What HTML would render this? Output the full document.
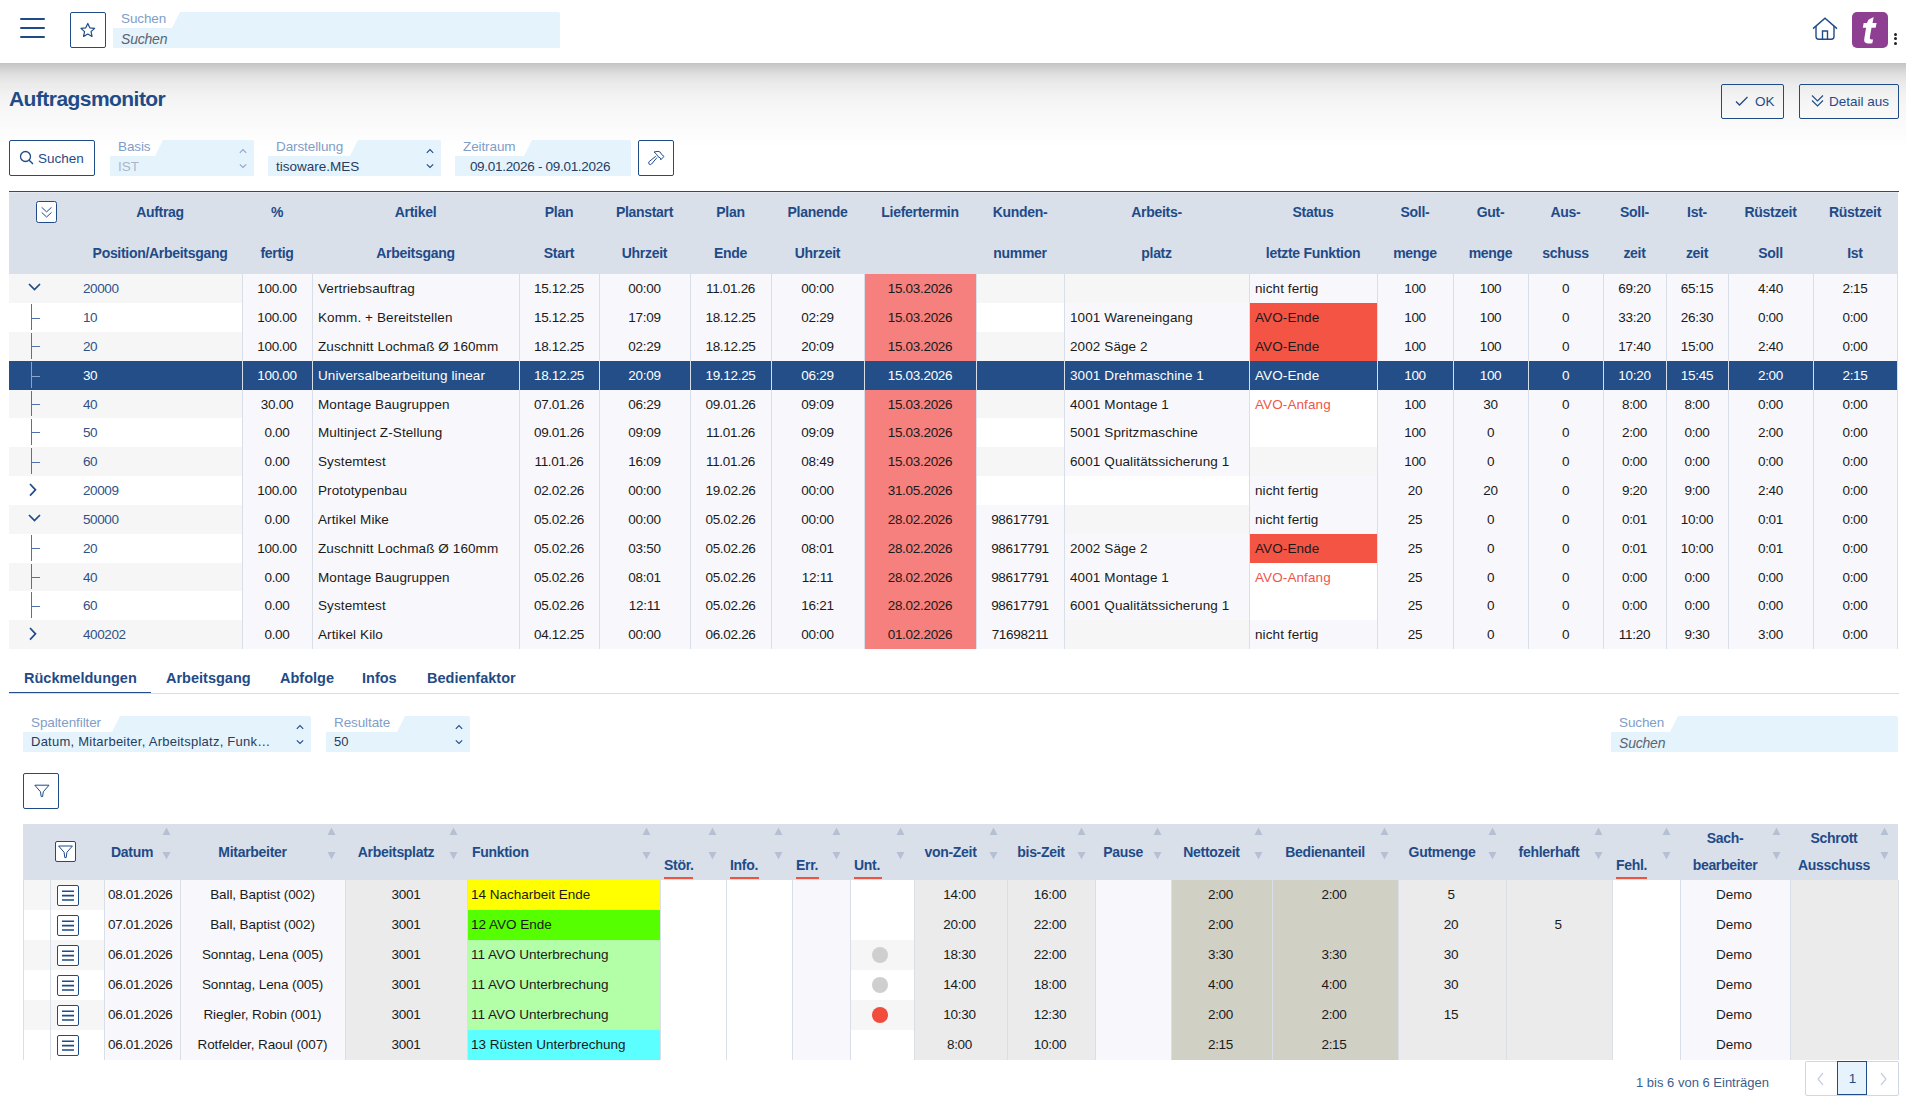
<!DOCTYPE html>
<html><head><meta charset="utf-8"><title>Auftragsmonitor</title>
<style>
html,body{margin:0;padding:0;}
body{width:1906px;height:1108px;position:relative;overflow:hidden;background:#fff;font-family:"Liberation Sans",sans-serif;}
.t{position:absolute;height:20px;line-height:20px;white-space:nowrap;}
</style></head><body>
<div style="position:absolute;left:0px;top:0px;width:1906px;height:63px;background:#fff;"></div><div style="position:absolute;left:0px;top:63px;width:1906px;height:85px;background:linear-gradient(to bottom,#c3c3c3 0px,#d3d3d3 6px,#e0e0e0 12px,#eaeaea 20px,#f1f1f1 30px,#f6f6f6 42px,#f9f9f9 55px,#fcfcfc 70px,#fff 85px);"></div><div style="position:absolute;left:19.8px;top:18.2px;width:25.2px;height:1.8px;background:#1f4b87;border-radius:1px;"></div><div style="position:absolute;left:19.8px;top:27.3px;width:25.2px;height:1.8px;background:#1f4b87;border-radius:1px;"></div><div style="position:absolute;left:19.8px;top:36.3px;width:25.2px;height:1.8px;background:#1f4b87;border-radius:1px;"></div><div style="position:absolute;left:70px;top:12px;width:34px;height:34px;border:1px solid #1f4b87;border-radius:2px;background:#fff;"><svg width="34" height="34" viewBox="0 0 34 34" style="position:absolute;left:0;top:0"><path d="M16.80 10.40 L18.80 14.85 L23.65 15.38 L20.03 18.65 L21.03 23.42 L16.80 21.00 L12.57 23.42 L13.57 18.65 L9.95 15.38 L14.80 14.85 Z" fill="none" stroke="#1f4b87" stroke-width="1.2" stroke-linejoin="round"/></svg></div><svg style="position:absolute;left:113px;top:12px" width="447" height="36"><path d="M0 16 L59 16 L67 0 L445 0 Q447 0 447 2 L447 36 L0 36 Z" fill="#e5f3fd"/></svg><div class="t" style="left:121px;top:8.5px;color:#7f9dc7;font-size:13.5px;letter-spacing:-0.1px;">Suchen</div><div class="t" style="left:121px;top:28.799999999999997px;color:#5a6470;font-style:italic;font-size:14px;letter-spacing:-0.2px;">Suchen</div><svg style="position:absolute;left:1810px;top:15px" width="30" height="28" viewBox="0 0 30 28"><path d="M3 13.6 L15 3.2 L27 13.6" fill="none" stroke="#1f4b87" stroke-width="1.4"/><path d="M6 11 L6 21.5 Q6 24.2 8.7 24.2 L21.3 24.2 Q24 24.2 24 21.5 L24 11" fill="none" stroke="#1f4b87" stroke-width="1.4"/><path d="M12.5 24 L12.5 16 L17.5 16 L17.5 24" fill="none" stroke="#1f4b87" stroke-width="1.4"/></svg><div style="position:absolute;left:1852px;top:12px;width:36px;height:36px;background:#8e3f92;border-radius:5px;"><svg width="36" height="36" viewBox="0 0 36 36" style="position:absolute;left:0;top:0"><g transform="translate(-0.8,0)"><path d="M17.2 7.8 L22.5 5.1 L21.3 11.1 L25.4 11.1 L24.4 15.8 L20.3 15.8 L18.6 25.6 Q18.3 27.6 20.3 27.6 L21.9 27.6 L21.1 31.3 Q18.5 31.6 16.5 31.4 Q12.3 31 13.1 26.4 L14.9 15.8 L11.6 15.8 L12.5 11.1 L15.8 11.1 Z" fill="#fff"/></g></svg></div><div style="position:absolute;left:1893.9px;top:32.6px;width:3.2px;height:3.2px;background:#222;border-radius:50%;"></div><div style="position:absolute;left:1893.9px;top:37.0px;width:3.2px;height:3.2px;background:#222;border-radius:50%;"></div><div style="position:absolute;left:1893.9px;top:41.5px;width:3.2px;height:3.2px;background:#222;border-radius:50%;"></div><div class="t" style="left:9px;top:88.6px;color:#1f4b87;font-size:21px;font-weight:bold;letter-spacing:-0.55px;">Auftragsmonitor</div><div style="position:absolute;left:1721px;top:84px;width:61px;height:33px;border:1.5px solid #1f4b87;border-radius:2px;"></div><svg style="position:absolute;left:1734px;top:94px" width="16" height="14"><path d="M2 7.5 L5.5 11 L13.5 3" fill="none" stroke="#1f4b87" stroke-width="1.3"/></svg><div class="t" style="left:1755px;top:91.6px;color:#1f4b87;font-size:13.5px;">OK</div><div style="position:absolute;left:1799px;top:84px;width:98px;height:33px;border:1.5px solid #1f4b87;border-radius:2px;"></div><svg style="position:absolute;left:1810px;top:93px" width="16" height="16"><path d="M2 2.5 L7.5 8 L13 2.5 M2 7.5 L7.5 13 L13 7.5" fill="none" stroke="#1f4b87" stroke-width="1.1"/></svg><div class="t" style="left:1829px;top:91.6px;color:#1f4b87;font-size:13.5px;">Detail aus</div><div style="position:absolute;left:9px;top:140px;width:84px;height:34px;border:1px solid #1f4b87;border-radius:2px;background:#fff;"></div><svg style="position:absolute;left:19px;top:150px" width="16" height="16"><circle cx="6.5" cy="6.5" r="5" fill="none" stroke="#1f4b87" stroke-width="1.3"/><path d="M10.2 10.2 L14 14" stroke="#1f4b87" stroke-width="1.4"/></svg><div class="t" style="left:38px;top:148.7px;color:#1f4b87;font-size:13.5px;">Suchen</div><svg style="position:absolute;left:110px;top:140px" width="144" height="36"><path d="M0 16 L45 16 L53 0 L142 0 Q144 0 144 2 L144 36 L0 36 Z" fill="#e5f3fd"/></svg><div class="t" style="left:118px;top:136.5px;color:#7f9dc7;font-size:13.5px;letter-spacing:-0.1px;">Basis</div><div class="t" style="left:118px;top:156.7px;color:#a9b6c9;font-size:13.5px;">IST</div><svg style="position:absolute;left:238px;top:140px" width="10" height="36"><path d="M1.8 12.8 L5 9.6 L8.2 12.8" fill="none" stroke="#8fa6c6" stroke-width="1.1"/><path d="M1.8 24.3 L5 27.5 L8.2 24.3" fill="none" stroke="#8fa6c6" stroke-width="1.1"/></svg><svg style="position:absolute;left:268px;top:140px" width="173" height="36"><path d="M0 16 L82 16 L90 0 L171 0 Q173 0 173 2 L173 36 L0 36 Z" fill="#e5f3fd"/></svg><div class="t" style="left:276px;top:136.5px;color:#7f9dc7;font-size:13.5px;letter-spacing:-0.1px;">Darstellung</div><div class="t" style="left:276px;top:156.7px;color:#273d5e;font-size:13.5px;">tisoware.MES</div><svg style="position:absolute;left:425px;top:140px" width="10" height="36"><path d="M1.8 12.8 L5 9.6 L8.2 12.8" fill="none" stroke="#1f4b87" stroke-width="1.1"/><path d="M1.8 24.3 L5 27.5 L8.2 24.3" fill="none" stroke="#1f4b87" stroke-width="1.1"/></svg><svg style="position:absolute;left:455px;top:140px" width="176" height="36"><path d="M0 16 L69 16 L77 0 L174 0 Q176 0 176 2 L176 36 L0 36 Z" fill="#e5f3fd"/></svg><div class="t" style="left:463px;top:136.5px;color:#7f9dc7;font-size:13.5px;letter-spacing:-0.1px;">Zeitraum</div><div class="t" style="left:463px;top:157px;color:#273d5e;font-size:13.5px;letter-spacing:-0.3px;">&nbsp;&nbsp;09.01.2026 - 09.01.2026</div><div style="position:absolute;left:638px;top:140px;width:34px;height:34px;border:1px solid #1f4b87;border-radius:2px;background:#fff;"></div><svg style="position:absolute;left:636px;top:138px" width="40" height="40" viewBox="0 0 40 40"><path d="M18 14 L22 13.3 Q24.8 13.5 25.6 16.5 L28 18.4 L24.8 21.8 L24.3 20 Q21.5 19 20.5 16.2 Z" fill="none" stroke="#1f4b87" stroke-width="1" stroke-linejoin="round"/><path d="M19.8 18.2 L13.2 23.6 Q12 25 13.2 26.2 Q14.5 27.2 15.6 26 L21 19.6" fill="none" stroke="#1f4b87" stroke-width="1"/></svg><div style="position:absolute;left:9px;top:191px;width:1890px;height:1px;background:#234e87;"></div><div style="position:absolute;left:9px;top:192px;width:1889px;height:1px;background:#e5e9ef;"></div><div style="position:absolute;left:9px;top:193px;width:1889px;height:81px;background:#d9e0ea;"></div><div style="position:absolute;left:36px;top:201px;width:19px;height:20px;border:1px solid #1f4b87;border-radius:2.5px;background:#fff;"><svg width="19" height="20" style="position:absolute;left:0;top:0"><path d="M4.7 5.3 L9.6 9.9 L14.5 5.3 M4.7 10.4 L9.6 15 L14.5 10.4" fill="none" stroke="#1f4b87" stroke-width="1"/></svg></div><div class="t" style="left:68.0px;top:202px;width:184px;text-align:center;color:#1f4b87;font-weight:bold;font-size:14px;letter-spacing:-0.3px;">Auftrag</div><div class="t" style="left:68.0px;top:243px;width:184px;text-align:center;color:#1f4b87;font-weight:bold;font-size:14px;letter-spacing:-0.3px;">Position/Arbeitsgang</div><div class="t" style="left:232.0px;top:202px;width:90px;text-align:center;color:#1f4b87;font-weight:bold;font-size:14px;letter-spacing:-0.3px;">%</div><div class="t" style="left:232.0px;top:243px;width:90px;text-align:center;color:#1f4b87;font-weight:bold;font-size:14px;letter-spacing:-0.3px;">fertig</div><div class="t" style="left:302.0px;top:202px;width:227px;text-align:center;color:#1f4b87;font-weight:bold;font-size:14px;letter-spacing:-0.3px;">Artikel</div><div class="t" style="left:302.0px;top:243px;width:227px;text-align:center;color:#1f4b87;font-weight:bold;font-size:14px;letter-spacing:-0.3px;">Arbeitsgang</div><div class="t" style="left:509.0px;top:202px;width:100px;text-align:center;color:#1f4b87;font-weight:bold;font-size:14px;letter-spacing:-0.3px;">Plan</div><div class="t" style="left:509.0px;top:243px;width:100px;text-align:center;color:#1f4b87;font-weight:bold;font-size:14px;letter-spacing:-0.3px;">Start</div><div class="t" style="left:589.0px;top:202px;width:111px;text-align:center;color:#1f4b87;font-weight:bold;font-size:14px;letter-spacing:-0.3px;">Planstart</div><div class="t" style="left:589.0px;top:243px;width:111px;text-align:center;color:#1f4b87;font-weight:bold;font-size:14px;letter-spacing:-0.3px;">Uhrzeit</div><div class="t" style="left:680.0px;top:202px;width:101px;text-align:center;color:#1f4b87;font-weight:bold;font-size:14px;letter-spacing:-0.3px;">Plan</div><div class="t" style="left:680.0px;top:243px;width:101px;text-align:center;color:#1f4b87;font-weight:bold;font-size:14px;letter-spacing:-0.3px;">Ende</div><div class="t" style="left:761.0px;top:202px;width:113px;text-align:center;color:#1f4b87;font-weight:bold;font-size:14px;letter-spacing:-0.3px;">Planende</div><div class="t" style="left:761.0px;top:243px;width:113px;text-align:center;color:#1f4b87;font-weight:bold;font-size:14px;letter-spacing:-0.3px;">Uhrzeit</div><div class="t" style="left:854.0px;top:202px;width:132px;text-align:center;color:#1f4b87;font-weight:bold;font-size:14px;letter-spacing:-0.3px;">Liefertermin</div><div class="t" style="left:966.0px;top:202px;width:108px;text-align:center;color:#1f4b87;font-weight:bold;font-size:14px;letter-spacing:-0.3px;">Kunden-</div><div class="t" style="left:966.0px;top:243px;width:108px;text-align:center;color:#1f4b87;font-weight:bold;font-size:14px;letter-spacing:-0.3px;">nummer</div><div class="t" style="left:1054.0px;top:202px;width:205px;text-align:center;color:#1f4b87;font-weight:bold;font-size:14px;letter-spacing:-0.3px;">Arbeits-</div><div class="t" style="left:1054.0px;top:243px;width:205px;text-align:center;color:#1f4b87;font-weight:bold;font-size:14px;letter-spacing:-0.3px;">platz</div><div class="t" style="left:1239.0px;top:202px;width:148px;text-align:center;color:#1f4b87;font-weight:bold;font-size:14px;letter-spacing:-0.3px;">Status</div><div class="t" style="left:1239.0px;top:243px;width:148px;text-align:center;color:#1f4b87;font-weight:bold;font-size:14px;letter-spacing:-0.3px;">letzte Funktion</div><div class="t" style="left:1367.0px;top:202px;width:96px;text-align:center;color:#1f4b87;font-weight:bold;font-size:14px;letter-spacing:-0.3px;">Soll-</div><div class="t" style="left:1367.0px;top:243px;width:96px;text-align:center;color:#1f4b87;font-weight:bold;font-size:14px;letter-spacing:-0.3px;">menge</div><div class="t" style="left:1443.0px;top:202px;width:95px;text-align:center;color:#1f4b87;font-weight:bold;font-size:14px;letter-spacing:-0.3px;">Gut-</div><div class="t" style="left:1443.0px;top:243px;width:95px;text-align:center;color:#1f4b87;font-weight:bold;font-size:14px;letter-spacing:-0.3px;">menge</div><div class="t" style="left:1518.0px;top:202px;width:95px;text-align:center;color:#1f4b87;font-weight:bold;font-size:14px;letter-spacing:-0.3px;">Aus-</div><div class="t" style="left:1518.0px;top:243px;width:95px;text-align:center;color:#1f4b87;font-weight:bold;font-size:14px;letter-spacing:-0.3px;">schuss</div><div class="t" style="left:1593.0px;top:202px;width:83px;text-align:center;color:#1f4b87;font-weight:bold;font-size:14px;letter-spacing:-0.3px;">Soll-</div><div class="t" style="left:1593.0px;top:243px;width:83px;text-align:center;color:#1f4b87;font-weight:bold;font-size:14px;letter-spacing:-0.3px;">zeit</div><div class="t" style="left:1656.0px;top:202px;width:82px;text-align:center;color:#1f4b87;font-weight:bold;font-size:14px;letter-spacing:-0.3px;">Ist-</div><div class="t" style="left:1656.0px;top:243px;width:82px;text-align:center;color:#1f4b87;font-weight:bold;font-size:14px;letter-spacing:-0.3px;">zeit</div><div class="t" style="left:1718.0px;top:202px;width:105px;text-align:center;color:#1f4b87;font-weight:bold;font-size:14px;letter-spacing:-0.3px;">Rüstzeit</div><div class="t" style="left:1718.0px;top:243px;width:105px;text-align:center;color:#1f4b87;font-weight:bold;font-size:14px;letter-spacing:-0.3px;">Soll</div><div class="t" style="left:1803.0px;top:202px;width:104px;text-align:center;color:#1f4b87;font-weight:bold;font-size:14px;letter-spacing:-0.3px;">Rüstzeit</div><div class="t" style="left:1803.0px;top:243px;width:104px;text-align:center;color:#1f4b87;font-weight:bold;font-size:14px;letter-spacing:-0.3px;">Ist</div><div style="position:absolute;left:9px;top:274px;width:233px;height:29px;background:#f6f6f6;"></div><div style="position:absolute;left:242px;top:274px;width:70px;height:29px;background:#f8f8fc;"></div><div style="position:absolute;left:312px;top:274px;width:207px;height:29px;background:#f8f8fc;"></div><div style="position:absolute;left:519px;top:274px;width:80px;height:29px;background:#f8f8fc;"></div><div style="position:absolute;left:599px;top:274px;width:91px;height:29px;background:#f8f8fc;"></div><div style="position:absolute;left:690px;top:274px;width:81px;height:29px;background:#f8f8fc;"></div><div style="position:absolute;left:771px;top:274px;width:93px;height:29px;background:#f8f8fc;"></div><div style="position:absolute;left:864px;top:274px;width:112px;height:29px;background:#f5807d;"></div><div style="position:absolute;left:976px;top:274px;width:88px;height:29px;background:#f6f6f6;"></div><div style="position:absolute;left:1064px;top:274px;width:185px;height:29px;background:#f6f6f6;"></div><div style="position:absolute;left:1249px;top:274px;width:128px;height:29px;background:#f8f8fc;"></div><div style="position:absolute;left:1377px;top:274px;width:76px;height:29px;background:#f8f8fc;"></div><div style="position:absolute;left:1453px;top:274px;width:75px;height:29px;background:#f8f8fc;"></div><div style="position:absolute;left:1528px;top:274px;width:75px;height:29px;background:#f8f8fc;"></div><div style="position:absolute;left:1603px;top:274px;width:63px;height:29px;background:#f8f8fc;"></div><div style="position:absolute;left:1666px;top:274px;width:62px;height:29px;background:#f8f8fc;"></div><div style="position:absolute;left:1728px;top:274px;width:85px;height:29px;background:#f8f8fc;"></div><div style="position:absolute;left:1813px;top:274px;width:84px;height:29px;background:#f8f8fc;"></div><svg style="position:absolute;left:27px;top:282.0px" width="16" height="10"><path d="M2 2 L7.5 7.5 L13 2" fill="none" stroke="#1f4b87" stroke-width="1.7"/></svg><div class="t" style="left:83px;top:279.0px;color:#2f5288;font-size:13.5px;letter-spacing:-0.4px;">20000</div><div class="t" style="left:242.0px;top:279.0px;width:70px;text-align:center;color:#1a1a1a;font-size:13.5px;letter-spacing:-0.3px;">100.00</div><div class="t" style="left:318px;top:279.0px;color:#1a1a1a;font-size:13.5px;letter-spacing:0.1px;">Vertriebsauftrag</div><div class="t" style="left:519.0px;top:279.0px;width:80px;text-align:center;color:#1a1a1a;font-size:13.5px;letter-spacing:-0.3px;">15.12.25</div><div class="t" style="left:599.0px;top:279.0px;width:91px;text-align:center;color:#1a1a1a;font-size:13.5px;letter-spacing:-0.3px;">00:00</div><div class="t" style="left:690.0px;top:279.0px;width:81px;text-align:center;color:#1a1a1a;font-size:13.5px;letter-spacing:-0.3px;">11.01.26</div><div class="t" style="left:771.0px;top:279.0px;width:93px;text-align:center;color:#1a1a1a;font-size:13.5px;letter-spacing:-0.3px;">00:00</div><div class="t" style="left:864.0px;top:279.0px;width:112px;text-align:center;color:#1a1a1a;font-size:13.5px;letter-spacing:-0.3px;">15.03.2026</div><div class="t" style="left:1255px;top:279.0px;color:#1a1a1a;font-size:13.5px;letter-spacing:0.1px;">nicht fertig</div><div class="t" style="left:1377.0px;top:279.0px;width:76px;text-align:center;color:#1a1a1a;font-size:13.5px;letter-spacing:-0.3px;">100</div><div class="t" style="left:1453.0px;top:279.0px;width:75px;text-align:center;color:#1a1a1a;font-size:13.5px;letter-spacing:-0.3px;">100</div><div class="t" style="left:1528.0px;top:279.0px;width:75px;text-align:center;color:#1a1a1a;font-size:13.5px;letter-spacing:-0.3px;">0</div><div class="t" style="left:1603.0px;top:279.0px;width:63px;text-align:center;color:#1a1a1a;font-size:13.5px;letter-spacing:-0.3px;">69:20</div><div class="t" style="left:1666.0px;top:279.0px;width:62px;text-align:center;color:#1a1a1a;font-size:13.5px;letter-spacing:-0.3px;">65:15</div><div class="t" style="left:1728.0px;top:279.0px;width:85px;text-align:center;color:#1a1a1a;font-size:13.5px;letter-spacing:-0.3px;">4:40</div><div class="t" style="left:1813.0px;top:279.0px;width:84px;text-align:center;color:#1a1a1a;font-size:13.5px;letter-spacing:-0.3px;">2:15</div><div style="position:absolute;left:9px;top:303px;width:233px;height:29px;background:#fff;"></div><div style="position:absolute;left:242px;top:303px;width:70px;height:29px;background:#f8f8fc;"></div><div style="position:absolute;left:312px;top:303px;width:207px;height:29px;background:#f8f8fc;"></div><div style="position:absolute;left:519px;top:303px;width:80px;height:29px;background:#f8f8fc;"></div><div style="position:absolute;left:599px;top:303px;width:91px;height:29px;background:#f8f8fc;"></div><div style="position:absolute;left:690px;top:303px;width:81px;height:29px;background:#f8f8fc;"></div><div style="position:absolute;left:771px;top:303px;width:93px;height:29px;background:#f8f8fc;"></div><div style="position:absolute;left:864px;top:303px;width:112px;height:29px;background:#f5807d;"></div><div style="position:absolute;left:976px;top:303px;width:88px;height:29px;background:#fff;"></div><div style="position:absolute;left:1064px;top:303px;width:185px;height:29px;background:#f8f8fc;"></div><div style="position:absolute;left:1249px;top:303px;width:128px;height:29px;background:#f45444;"></div><div style="position:absolute;left:1377px;top:303px;width:76px;height:29px;background:#f8f8fc;"></div><div style="position:absolute;left:1453px;top:303px;width:75px;height:29px;background:#f8f8fc;"></div><div style="position:absolute;left:1528px;top:303px;width:75px;height:29px;background:#f8f8fc;"></div><div style="position:absolute;left:1603px;top:303px;width:63px;height:29px;background:#f8f8fc;"></div><div style="position:absolute;left:1666px;top:303px;width:62px;height:29px;background:#f8f8fc;"></div><div style="position:absolute;left:1728px;top:303px;width:85px;height:29px;background:#f8f8fc;"></div><div style="position:absolute;left:1813px;top:303px;width:84px;height:29px;background:#f8f8fc;"></div><div style="position:absolute;left:31px;top:304px;width:1px;height:26px;background:#4d72ad;"></div><div style="position:absolute;left:31px;top:318px;width:9px;height:1px;background:#4d72ad;"></div><div class="t" style="left:83px;top:308.0px;color:#2f5288;font-size:13.5px;letter-spacing:-0.4px;">10</div><div class="t" style="left:242.0px;top:308.0px;width:70px;text-align:center;color:#1a1a1a;font-size:13.5px;letter-spacing:-0.3px;">100.00</div><div class="t" style="left:318px;top:308.0px;color:#1a1a1a;font-size:13.5px;letter-spacing:0.1px;">Komm. + Bereitstellen</div><div class="t" style="left:519.0px;top:308.0px;width:80px;text-align:center;color:#1a1a1a;font-size:13.5px;letter-spacing:-0.3px;">15.12.25</div><div class="t" style="left:599.0px;top:308.0px;width:91px;text-align:center;color:#1a1a1a;font-size:13.5px;letter-spacing:-0.3px;">17:09</div><div class="t" style="left:690.0px;top:308.0px;width:81px;text-align:center;color:#1a1a1a;font-size:13.5px;letter-spacing:-0.3px;">18.12.25</div><div class="t" style="left:771.0px;top:308.0px;width:93px;text-align:center;color:#1a1a1a;font-size:13.5px;letter-spacing:-0.3px;">02:29</div><div class="t" style="left:864.0px;top:308.0px;width:112px;text-align:center;color:#1a1a1a;font-size:13.5px;letter-spacing:-0.3px;">15.03.2026</div><div class="t" style="left:1070px;top:308.0px;color:#1a1a1a;font-size:13.5px;letter-spacing:0.1px;">1001 Wareneingang</div><div class="t" style="left:1255px;top:308.0px;color:#1a1a1a;font-size:13.5px;letter-spacing:0.1px;">AVO-Ende</div><div class="t" style="left:1377.0px;top:308.0px;width:76px;text-align:center;color:#1a1a1a;font-size:13.5px;letter-spacing:-0.3px;">100</div><div class="t" style="left:1453.0px;top:308.0px;width:75px;text-align:center;color:#1a1a1a;font-size:13.5px;letter-spacing:-0.3px;">100</div><div class="t" style="left:1528.0px;top:308.0px;width:75px;text-align:center;color:#1a1a1a;font-size:13.5px;letter-spacing:-0.3px;">0</div><div class="t" style="left:1603.0px;top:308.0px;width:63px;text-align:center;color:#1a1a1a;font-size:13.5px;letter-spacing:-0.3px;">33:20</div><div class="t" style="left:1666.0px;top:308.0px;width:62px;text-align:center;color:#1a1a1a;font-size:13.5px;letter-spacing:-0.3px;">26:30</div><div class="t" style="left:1728.0px;top:308.0px;width:85px;text-align:center;color:#1a1a1a;font-size:13.5px;letter-spacing:-0.3px;">0:00</div><div class="t" style="left:1813.0px;top:308.0px;width:84px;text-align:center;color:#1a1a1a;font-size:13.5px;letter-spacing:-0.3px;">0:00</div><div style="position:absolute;left:9px;top:332px;width:233px;height:29px;background:#f6f6f6;"></div><div style="position:absolute;left:242px;top:332px;width:70px;height:29px;background:#f8f8fc;"></div><div style="position:absolute;left:312px;top:332px;width:207px;height:29px;background:#f8f8fc;"></div><div style="position:absolute;left:519px;top:332px;width:80px;height:29px;background:#f8f8fc;"></div><div style="position:absolute;left:599px;top:332px;width:91px;height:29px;background:#f8f8fc;"></div><div style="position:absolute;left:690px;top:332px;width:81px;height:29px;background:#f8f8fc;"></div><div style="position:absolute;left:771px;top:332px;width:93px;height:29px;background:#f8f8fc;"></div><div style="position:absolute;left:864px;top:332px;width:112px;height:29px;background:#f5807d;"></div><div style="position:absolute;left:976px;top:332px;width:88px;height:29px;background:#f6f6f6;"></div><div style="position:absolute;left:1064px;top:332px;width:185px;height:29px;background:#f8f8fc;"></div><div style="position:absolute;left:1249px;top:332px;width:128px;height:29px;background:#f45444;"></div><div style="position:absolute;left:1377px;top:332px;width:76px;height:29px;background:#f8f8fc;"></div><div style="position:absolute;left:1453px;top:332px;width:75px;height:29px;background:#f8f8fc;"></div><div style="position:absolute;left:1528px;top:332px;width:75px;height:29px;background:#f8f8fc;"></div><div style="position:absolute;left:1603px;top:332px;width:63px;height:29px;background:#f8f8fc;"></div><div style="position:absolute;left:1666px;top:332px;width:62px;height:29px;background:#f8f8fc;"></div><div style="position:absolute;left:1728px;top:332px;width:85px;height:29px;background:#f8f8fc;"></div><div style="position:absolute;left:1813px;top:332px;width:84px;height:29px;background:#f8f8fc;"></div><div style="position:absolute;left:31px;top:333px;width:1px;height:26px;background:#4d72ad;"></div><div style="position:absolute;left:31px;top:346px;width:9px;height:1px;background:#4d72ad;"></div><div class="t" style="left:83px;top:337.0px;color:#2f5288;font-size:13.5px;letter-spacing:-0.4px;">20</div><div class="t" style="left:242.0px;top:337.0px;width:70px;text-align:center;color:#1a1a1a;font-size:13.5px;letter-spacing:-0.3px;">100.00</div><div class="t" style="left:318px;top:337.0px;color:#1a1a1a;font-size:13.5px;letter-spacing:0.1px;">Zuschnitt Lochmaß Ø 160mm</div><div class="t" style="left:519.0px;top:337.0px;width:80px;text-align:center;color:#1a1a1a;font-size:13.5px;letter-spacing:-0.3px;">18.12.25</div><div class="t" style="left:599.0px;top:337.0px;width:91px;text-align:center;color:#1a1a1a;font-size:13.5px;letter-spacing:-0.3px;">02:29</div><div class="t" style="left:690.0px;top:337.0px;width:81px;text-align:center;color:#1a1a1a;font-size:13.5px;letter-spacing:-0.3px;">18.12.25</div><div class="t" style="left:771.0px;top:337.0px;width:93px;text-align:center;color:#1a1a1a;font-size:13.5px;letter-spacing:-0.3px;">20:09</div><div class="t" style="left:864.0px;top:337.0px;width:112px;text-align:center;color:#1a1a1a;font-size:13.5px;letter-spacing:-0.3px;">15.03.2026</div><div class="t" style="left:1070px;top:337.0px;color:#1a1a1a;font-size:13.5px;letter-spacing:0.1px;">2002 Säge 2</div><div class="t" style="left:1255px;top:337.0px;color:#1a1a1a;font-size:13.5px;letter-spacing:0.1px;">AVO-Ende</div><div class="t" style="left:1377.0px;top:337.0px;width:76px;text-align:center;color:#1a1a1a;font-size:13.5px;letter-spacing:-0.3px;">100</div><div class="t" style="left:1453.0px;top:337.0px;width:75px;text-align:center;color:#1a1a1a;font-size:13.5px;letter-spacing:-0.3px;">100</div><div class="t" style="left:1528.0px;top:337.0px;width:75px;text-align:center;color:#1a1a1a;font-size:13.5px;letter-spacing:-0.3px;">0</div><div class="t" style="left:1603.0px;top:337.0px;width:63px;text-align:center;color:#1a1a1a;font-size:13.5px;letter-spacing:-0.3px;">17:40</div><div class="t" style="left:1666.0px;top:337.0px;width:62px;text-align:center;color:#1a1a1a;font-size:13.5px;letter-spacing:-0.3px;">15:00</div><div class="t" style="left:1728.0px;top:337.0px;width:85px;text-align:center;color:#1a1a1a;font-size:13.5px;letter-spacing:-0.3px;">2:40</div><div class="t" style="left:1813.0px;top:337.0px;width:84px;text-align:center;color:#1a1a1a;font-size:13.5px;letter-spacing:-0.3px;">0:00</div><div style="position:absolute;left:9px;top:361px;width:1889px;height:29px;background:#234e87;"></div><div style="position:absolute;left:31px;top:362px;width:1px;height:26px;background:#8aa3c9;"></div><div style="position:absolute;left:31px;top:376px;width:9px;height:1px;background:#8aa3c9;"></div><div class="t" style="left:83px;top:366.0px;color:#fff;font-size:13.5px;letter-spacing:-0.4px;">30</div><div class="t" style="left:242.0px;top:366.0px;width:70px;text-align:center;color:#fff;font-size:13.5px;letter-spacing:-0.3px;">100.00</div><div class="t" style="left:318px;top:366.0px;color:#fff;font-size:13.5px;letter-spacing:0.1px;">Universalbearbeitung linear</div><div class="t" style="left:519.0px;top:366.0px;width:80px;text-align:center;color:#fff;font-size:13.5px;letter-spacing:-0.3px;">18.12.25</div><div class="t" style="left:599.0px;top:366.0px;width:91px;text-align:center;color:#fff;font-size:13.5px;letter-spacing:-0.3px;">20:09</div><div class="t" style="left:690.0px;top:366.0px;width:81px;text-align:center;color:#fff;font-size:13.5px;letter-spacing:-0.3px;">19.12.25</div><div class="t" style="left:771.0px;top:366.0px;width:93px;text-align:center;color:#fff;font-size:13.5px;letter-spacing:-0.3px;">06:29</div><div class="t" style="left:864.0px;top:366.0px;width:112px;text-align:center;color:#fff;font-size:13.5px;letter-spacing:-0.3px;">15.03.2026</div><div class="t" style="left:1070px;top:366.0px;color:#fff;font-size:13.5px;letter-spacing:0.1px;">3001 Drehmaschine 1</div><div class="t" style="left:1255px;top:366.0px;color:#fff;font-size:13.5px;letter-spacing:0.1px;">AVO-Ende</div><div class="t" style="left:1377.0px;top:366.0px;width:76px;text-align:center;color:#fff;font-size:13.5px;letter-spacing:-0.3px;">100</div><div class="t" style="left:1453.0px;top:366.0px;width:75px;text-align:center;color:#fff;font-size:13.5px;letter-spacing:-0.3px;">100</div><div class="t" style="left:1528.0px;top:366.0px;width:75px;text-align:center;color:#fff;font-size:13.5px;letter-spacing:-0.3px;">0</div><div class="t" style="left:1603.0px;top:366.0px;width:63px;text-align:center;color:#fff;font-size:13.5px;letter-spacing:-0.3px;">10:20</div><div class="t" style="left:1666.0px;top:366.0px;width:62px;text-align:center;color:#fff;font-size:13.5px;letter-spacing:-0.3px;">15:45</div><div class="t" style="left:1728.0px;top:366.0px;width:85px;text-align:center;color:#fff;font-size:13.5px;letter-spacing:-0.3px;">2:00</div><div class="t" style="left:1813.0px;top:366.0px;width:84px;text-align:center;color:#fff;font-size:13.5px;letter-spacing:-0.3px;">2:15</div><div style="position:absolute;left:9px;top:390px;width:233px;height:28px;background:#f6f6f6;"></div><div style="position:absolute;left:242px;top:390px;width:70px;height:28px;background:#f8f8fc;"></div><div style="position:absolute;left:312px;top:390px;width:207px;height:28px;background:#f8f8fc;"></div><div style="position:absolute;left:519px;top:390px;width:80px;height:28px;background:#f8f8fc;"></div><div style="position:absolute;left:599px;top:390px;width:91px;height:28px;background:#f8f8fc;"></div><div style="position:absolute;left:690px;top:390px;width:81px;height:28px;background:#f8f8fc;"></div><div style="position:absolute;left:771px;top:390px;width:93px;height:28px;background:#f8f8fc;"></div><div style="position:absolute;left:864px;top:390px;width:112px;height:28px;background:#f5807d;"></div><div style="position:absolute;left:976px;top:390px;width:88px;height:28px;background:#f6f6f6;"></div><div style="position:absolute;left:1064px;top:390px;width:185px;height:28px;background:#f8f8fc;"></div><div style="position:absolute;left:1249px;top:390px;width:128px;height:28px;background:#fff;"></div><div style="position:absolute;left:1377px;top:390px;width:76px;height:28px;background:#f8f8fc;"></div><div style="position:absolute;left:1453px;top:390px;width:75px;height:28px;background:#f8f8fc;"></div><div style="position:absolute;left:1528px;top:390px;width:75px;height:28px;background:#f8f8fc;"></div><div style="position:absolute;left:1603px;top:390px;width:63px;height:28px;background:#f8f8fc;"></div><div style="position:absolute;left:1666px;top:390px;width:62px;height:28px;background:#f8f8fc;"></div><div style="position:absolute;left:1728px;top:390px;width:85px;height:28px;background:#f8f8fc;"></div><div style="position:absolute;left:1813px;top:390px;width:84px;height:28px;background:#f8f8fc;"></div><div style="position:absolute;left:31px;top:391px;width:1px;height:25px;background:#4d72ad;"></div><div style="position:absolute;left:31px;top:404px;width:9px;height:1px;background:#4d72ad;"></div><div class="t" style="left:83px;top:394.5px;color:#2f5288;font-size:13.5px;letter-spacing:-0.4px;">40</div><div class="t" style="left:242.0px;top:394.5px;width:70px;text-align:center;color:#1a1a1a;font-size:13.5px;letter-spacing:-0.3px;">30.00</div><div class="t" style="left:318px;top:394.5px;color:#1a1a1a;font-size:13.5px;letter-spacing:0.1px;">Montage Baugruppen</div><div class="t" style="left:519.0px;top:394.5px;width:80px;text-align:center;color:#1a1a1a;font-size:13.5px;letter-spacing:-0.3px;">07.01.26</div><div class="t" style="left:599.0px;top:394.5px;width:91px;text-align:center;color:#1a1a1a;font-size:13.5px;letter-spacing:-0.3px;">06:29</div><div class="t" style="left:690.0px;top:394.5px;width:81px;text-align:center;color:#1a1a1a;font-size:13.5px;letter-spacing:-0.3px;">09.01.26</div><div class="t" style="left:771.0px;top:394.5px;width:93px;text-align:center;color:#1a1a1a;font-size:13.5px;letter-spacing:-0.3px;">09:09</div><div class="t" style="left:864.0px;top:394.5px;width:112px;text-align:center;color:#1a1a1a;font-size:13.5px;letter-spacing:-0.3px;">15.03.2026</div><div class="t" style="left:1070px;top:394.5px;color:#1a1a1a;font-size:13.5px;letter-spacing:0.1px;">4001 Montage 1</div><div class="t" style="left:1255px;top:394.5px;color:#f0564a;font-size:13.5px;letter-spacing:0.1px;">AVO-Anfang</div><div class="t" style="left:1377.0px;top:394.5px;width:76px;text-align:center;color:#1a1a1a;font-size:13.5px;letter-spacing:-0.3px;">100</div><div class="t" style="left:1453.0px;top:394.5px;width:75px;text-align:center;color:#1a1a1a;font-size:13.5px;letter-spacing:-0.3px;">30</div><div class="t" style="left:1528.0px;top:394.5px;width:75px;text-align:center;color:#1a1a1a;font-size:13.5px;letter-spacing:-0.3px;">0</div><div class="t" style="left:1603.0px;top:394.5px;width:63px;text-align:center;color:#1a1a1a;font-size:13.5px;letter-spacing:-0.3px;">8:00</div><div class="t" style="left:1666.0px;top:394.5px;width:62px;text-align:center;color:#1a1a1a;font-size:13.5px;letter-spacing:-0.3px;">8:00</div><div class="t" style="left:1728.0px;top:394.5px;width:85px;text-align:center;color:#1a1a1a;font-size:13.5px;letter-spacing:-0.3px;">0:00</div><div class="t" style="left:1813.0px;top:394.5px;width:84px;text-align:center;color:#1a1a1a;font-size:13.5px;letter-spacing:-0.3px;">0:00</div><div style="position:absolute;left:9px;top:418px;width:233px;height:29px;background:#fff;"></div><div style="position:absolute;left:242px;top:418px;width:70px;height:29px;background:#f8f8fc;"></div><div style="position:absolute;left:312px;top:418px;width:207px;height:29px;background:#f8f8fc;"></div><div style="position:absolute;left:519px;top:418px;width:80px;height:29px;background:#f8f8fc;"></div><div style="position:absolute;left:599px;top:418px;width:91px;height:29px;background:#f8f8fc;"></div><div style="position:absolute;left:690px;top:418px;width:81px;height:29px;background:#f8f8fc;"></div><div style="position:absolute;left:771px;top:418px;width:93px;height:29px;background:#f8f8fc;"></div><div style="position:absolute;left:864px;top:418px;width:112px;height:29px;background:#f5807d;"></div><div style="position:absolute;left:976px;top:418px;width:88px;height:29px;background:#fff;"></div><div style="position:absolute;left:1064px;top:418px;width:185px;height:29px;background:#f8f8fc;"></div><div style="position:absolute;left:1249px;top:418px;width:128px;height:29px;background:#fff;"></div><div style="position:absolute;left:1377px;top:418px;width:76px;height:29px;background:#f8f8fc;"></div><div style="position:absolute;left:1453px;top:418px;width:75px;height:29px;background:#f8f8fc;"></div><div style="position:absolute;left:1528px;top:418px;width:75px;height:29px;background:#f8f8fc;"></div><div style="position:absolute;left:1603px;top:418px;width:63px;height:29px;background:#f8f8fc;"></div><div style="position:absolute;left:1666px;top:418px;width:62px;height:29px;background:#f8f8fc;"></div><div style="position:absolute;left:1728px;top:418px;width:85px;height:29px;background:#f8f8fc;"></div><div style="position:absolute;left:1813px;top:418px;width:84px;height:29px;background:#f8f8fc;"></div><div style="position:absolute;left:31px;top:419px;width:1px;height:26px;background:#4d72ad;"></div><div style="position:absolute;left:31px;top:432px;width:9px;height:1px;background:#4d72ad;"></div><div class="t" style="left:83px;top:423.0px;color:#2f5288;font-size:13.5px;letter-spacing:-0.4px;">50</div><div class="t" style="left:242.0px;top:423.0px;width:70px;text-align:center;color:#1a1a1a;font-size:13.5px;letter-spacing:-0.3px;">0.00</div><div class="t" style="left:318px;top:423.0px;color:#1a1a1a;font-size:13.5px;letter-spacing:0.1px;">Multinject Z-Stellung</div><div class="t" style="left:519.0px;top:423.0px;width:80px;text-align:center;color:#1a1a1a;font-size:13.5px;letter-spacing:-0.3px;">09.01.26</div><div class="t" style="left:599.0px;top:423.0px;width:91px;text-align:center;color:#1a1a1a;font-size:13.5px;letter-spacing:-0.3px;">09:09</div><div class="t" style="left:690.0px;top:423.0px;width:81px;text-align:center;color:#1a1a1a;font-size:13.5px;letter-spacing:-0.3px;">11.01.26</div><div class="t" style="left:771.0px;top:423.0px;width:93px;text-align:center;color:#1a1a1a;font-size:13.5px;letter-spacing:-0.3px;">09:09</div><div class="t" style="left:864.0px;top:423.0px;width:112px;text-align:center;color:#1a1a1a;font-size:13.5px;letter-spacing:-0.3px;">15.03.2026</div><div class="t" style="left:1070px;top:423.0px;color:#1a1a1a;font-size:13.5px;letter-spacing:0.1px;">5001 Spritzmaschine</div><div class="t" style="left:1377.0px;top:423.0px;width:76px;text-align:center;color:#1a1a1a;font-size:13.5px;letter-spacing:-0.3px;">100</div><div class="t" style="left:1453.0px;top:423.0px;width:75px;text-align:center;color:#1a1a1a;font-size:13.5px;letter-spacing:-0.3px;">0</div><div class="t" style="left:1528.0px;top:423.0px;width:75px;text-align:center;color:#1a1a1a;font-size:13.5px;letter-spacing:-0.3px;">0</div><div class="t" style="left:1603.0px;top:423.0px;width:63px;text-align:center;color:#1a1a1a;font-size:13.5px;letter-spacing:-0.3px;">2:00</div><div class="t" style="left:1666.0px;top:423.0px;width:62px;text-align:center;color:#1a1a1a;font-size:13.5px;letter-spacing:-0.3px;">0:00</div><div class="t" style="left:1728.0px;top:423.0px;width:85px;text-align:center;color:#1a1a1a;font-size:13.5px;letter-spacing:-0.3px;">2:00</div><div class="t" style="left:1813.0px;top:423.0px;width:84px;text-align:center;color:#1a1a1a;font-size:13.5px;letter-spacing:-0.3px;">0:00</div><div style="position:absolute;left:9px;top:447px;width:233px;height:29px;background:#f6f6f6;"></div><div style="position:absolute;left:242px;top:447px;width:70px;height:29px;background:#f8f8fc;"></div><div style="position:absolute;left:312px;top:447px;width:207px;height:29px;background:#f8f8fc;"></div><div style="position:absolute;left:519px;top:447px;width:80px;height:29px;background:#f8f8fc;"></div><div style="position:absolute;left:599px;top:447px;width:91px;height:29px;background:#f8f8fc;"></div><div style="position:absolute;left:690px;top:447px;width:81px;height:29px;background:#f8f8fc;"></div><div style="position:absolute;left:771px;top:447px;width:93px;height:29px;background:#f8f8fc;"></div><div style="position:absolute;left:864px;top:447px;width:112px;height:29px;background:#f5807d;"></div><div style="position:absolute;left:976px;top:447px;width:88px;height:29px;background:#f6f6f6;"></div><div style="position:absolute;left:1064px;top:447px;width:185px;height:29px;background:#f8f8fc;"></div><div style="position:absolute;left:1249px;top:447px;width:128px;height:29px;background:#f6f6f6;"></div><div style="position:absolute;left:1377px;top:447px;width:76px;height:29px;background:#f8f8fc;"></div><div style="position:absolute;left:1453px;top:447px;width:75px;height:29px;background:#f8f8fc;"></div><div style="position:absolute;left:1528px;top:447px;width:75px;height:29px;background:#f8f8fc;"></div><div style="position:absolute;left:1603px;top:447px;width:63px;height:29px;background:#f8f8fc;"></div><div style="position:absolute;left:1666px;top:447px;width:62px;height:29px;background:#f8f8fc;"></div><div style="position:absolute;left:1728px;top:447px;width:85px;height:29px;background:#f8f8fc;"></div><div style="position:absolute;left:1813px;top:447px;width:84px;height:29px;background:#f8f8fc;"></div><div style="position:absolute;left:31px;top:448px;width:1px;height:26px;background:#4d72ad;"></div><div style="position:absolute;left:31px;top:462px;width:9px;height:1px;background:#4d72ad;"></div><div class="t" style="left:83px;top:452.0px;color:#2f5288;font-size:13.5px;letter-spacing:-0.4px;">60</div><div class="t" style="left:242.0px;top:452.0px;width:70px;text-align:center;color:#1a1a1a;font-size:13.5px;letter-spacing:-0.3px;">0.00</div><div class="t" style="left:318px;top:452.0px;color:#1a1a1a;font-size:13.5px;letter-spacing:0.1px;">Systemtest</div><div class="t" style="left:519.0px;top:452.0px;width:80px;text-align:center;color:#1a1a1a;font-size:13.5px;letter-spacing:-0.3px;">11.01.26</div><div class="t" style="left:599.0px;top:452.0px;width:91px;text-align:center;color:#1a1a1a;font-size:13.5px;letter-spacing:-0.3px;">16:09</div><div class="t" style="left:690.0px;top:452.0px;width:81px;text-align:center;color:#1a1a1a;font-size:13.5px;letter-spacing:-0.3px;">11.01.26</div><div class="t" style="left:771.0px;top:452.0px;width:93px;text-align:center;color:#1a1a1a;font-size:13.5px;letter-spacing:-0.3px;">08:49</div><div class="t" style="left:864.0px;top:452.0px;width:112px;text-align:center;color:#1a1a1a;font-size:13.5px;letter-spacing:-0.3px;">15.03.2026</div><div class="t" style="left:1070px;top:452.0px;color:#1a1a1a;font-size:13.5px;letter-spacing:0.1px;">6001 Qualitätssicherung 1</div><div class="t" style="left:1377.0px;top:452.0px;width:76px;text-align:center;color:#1a1a1a;font-size:13.5px;letter-spacing:-0.3px;">100</div><div class="t" style="left:1453.0px;top:452.0px;width:75px;text-align:center;color:#1a1a1a;font-size:13.5px;letter-spacing:-0.3px;">0</div><div class="t" style="left:1528.0px;top:452.0px;width:75px;text-align:center;color:#1a1a1a;font-size:13.5px;letter-spacing:-0.3px;">0</div><div class="t" style="left:1603.0px;top:452.0px;width:63px;text-align:center;color:#1a1a1a;font-size:13.5px;letter-spacing:-0.3px;">0:00</div><div class="t" style="left:1666.0px;top:452.0px;width:62px;text-align:center;color:#1a1a1a;font-size:13.5px;letter-spacing:-0.3px;">0:00</div><div class="t" style="left:1728.0px;top:452.0px;width:85px;text-align:center;color:#1a1a1a;font-size:13.5px;letter-spacing:-0.3px;">0:00</div><div class="t" style="left:1813.0px;top:452.0px;width:84px;text-align:center;color:#1a1a1a;font-size:13.5px;letter-spacing:-0.3px;">0:00</div><div style="position:absolute;left:9px;top:476px;width:233px;height:29px;background:#fff;"></div><div style="position:absolute;left:242px;top:476px;width:70px;height:29px;background:#f8f8fc;"></div><div style="position:absolute;left:312px;top:476px;width:207px;height:29px;background:#f8f8fc;"></div><div style="position:absolute;left:519px;top:476px;width:80px;height:29px;background:#f8f8fc;"></div><div style="position:absolute;left:599px;top:476px;width:91px;height:29px;background:#f8f8fc;"></div><div style="position:absolute;left:690px;top:476px;width:81px;height:29px;background:#f8f8fc;"></div><div style="position:absolute;left:771px;top:476px;width:93px;height:29px;background:#f8f8fc;"></div><div style="position:absolute;left:864px;top:476px;width:112px;height:29px;background:#f5807d;"></div><div style="position:absolute;left:976px;top:476px;width:88px;height:29px;background:#fff;"></div><div style="position:absolute;left:1064px;top:476px;width:185px;height:29px;background:#fff;"></div><div style="position:absolute;left:1249px;top:476px;width:128px;height:29px;background:#f8f8fc;"></div><div style="position:absolute;left:1377px;top:476px;width:76px;height:29px;background:#f8f8fc;"></div><div style="position:absolute;left:1453px;top:476px;width:75px;height:29px;background:#f8f8fc;"></div><div style="position:absolute;left:1528px;top:476px;width:75px;height:29px;background:#f8f8fc;"></div><div style="position:absolute;left:1603px;top:476px;width:63px;height:29px;background:#f8f8fc;"></div><div style="position:absolute;left:1666px;top:476px;width:62px;height:29px;background:#f8f8fc;"></div><div style="position:absolute;left:1728px;top:476px;width:85px;height:29px;background:#f8f8fc;"></div><div style="position:absolute;left:1813px;top:476px;width:84px;height:29px;background:#f8f8fc;"></div><svg style="position:absolute;left:27px;top:481.5px" width="12" height="16"><path d="M3 2 L8.5 7.8 L3 13.6" fill="none" stroke="#1f4b87" stroke-width="1.7"/></svg><div class="t" style="left:83px;top:481.0px;color:#2f5288;font-size:13.5px;letter-spacing:-0.4px;">20009</div><div class="t" style="left:242.0px;top:481.0px;width:70px;text-align:center;color:#1a1a1a;font-size:13.5px;letter-spacing:-0.3px;">100.00</div><div class="t" style="left:318px;top:481.0px;color:#1a1a1a;font-size:13.5px;letter-spacing:0.1px;">Prototypenbau</div><div class="t" style="left:519.0px;top:481.0px;width:80px;text-align:center;color:#1a1a1a;font-size:13.5px;letter-spacing:-0.3px;">02.02.26</div><div class="t" style="left:599.0px;top:481.0px;width:91px;text-align:center;color:#1a1a1a;font-size:13.5px;letter-spacing:-0.3px;">00:00</div><div class="t" style="left:690.0px;top:481.0px;width:81px;text-align:center;color:#1a1a1a;font-size:13.5px;letter-spacing:-0.3px;">19.02.26</div><div class="t" style="left:771.0px;top:481.0px;width:93px;text-align:center;color:#1a1a1a;font-size:13.5px;letter-spacing:-0.3px;">00:00</div><div class="t" style="left:864.0px;top:481.0px;width:112px;text-align:center;color:#1a1a1a;font-size:13.5px;letter-spacing:-0.3px;">31.05.2026</div><div class="t" style="left:1255px;top:481.0px;color:#1a1a1a;font-size:13.5px;letter-spacing:0.1px;">nicht fertig</div><div class="t" style="left:1377.0px;top:481.0px;width:76px;text-align:center;color:#1a1a1a;font-size:13.5px;letter-spacing:-0.3px;">20</div><div class="t" style="left:1453.0px;top:481.0px;width:75px;text-align:center;color:#1a1a1a;font-size:13.5px;letter-spacing:-0.3px;">20</div><div class="t" style="left:1528.0px;top:481.0px;width:75px;text-align:center;color:#1a1a1a;font-size:13.5px;letter-spacing:-0.3px;">0</div><div class="t" style="left:1603.0px;top:481.0px;width:63px;text-align:center;color:#1a1a1a;font-size:13.5px;letter-spacing:-0.3px;">9:20</div><div class="t" style="left:1666.0px;top:481.0px;width:62px;text-align:center;color:#1a1a1a;font-size:13.5px;letter-spacing:-0.3px;">9:00</div><div class="t" style="left:1728.0px;top:481.0px;width:85px;text-align:center;color:#1a1a1a;font-size:13.5px;letter-spacing:-0.3px;">2:40</div><div class="t" style="left:1813.0px;top:481.0px;width:84px;text-align:center;color:#1a1a1a;font-size:13.5px;letter-spacing:-0.3px;">0:00</div><div style="position:absolute;left:9px;top:505px;width:233px;height:29px;background:#f6f6f6;"></div><div style="position:absolute;left:242px;top:505px;width:70px;height:29px;background:#f8f8fc;"></div><div style="position:absolute;left:312px;top:505px;width:207px;height:29px;background:#f8f8fc;"></div><div style="position:absolute;left:519px;top:505px;width:80px;height:29px;background:#f8f8fc;"></div><div style="position:absolute;left:599px;top:505px;width:91px;height:29px;background:#f8f8fc;"></div><div style="position:absolute;left:690px;top:505px;width:81px;height:29px;background:#f8f8fc;"></div><div style="position:absolute;left:771px;top:505px;width:93px;height:29px;background:#f8f8fc;"></div><div style="position:absolute;left:864px;top:505px;width:112px;height:29px;background:#f5807d;"></div><div style="position:absolute;left:976px;top:505px;width:88px;height:29px;background:#f8f8fc;"></div><div style="position:absolute;left:1064px;top:505px;width:185px;height:29px;background:#f6f6f6;"></div><div style="position:absolute;left:1249px;top:505px;width:128px;height:29px;background:#f8f8fc;"></div><div style="position:absolute;left:1377px;top:505px;width:76px;height:29px;background:#f8f8fc;"></div><div style="position:absolute;left:1453px;top:505px;width:75px;height:29px;background:#f8f8fc;"></div><div style="position:absolute;left:1528px;top:505px;width:75px;height:29px;background:#f8f8fc;"></div><div style="position:absolute;left:1603px;top:505px;width:63px;height:29px;background:#f8f8fc;"></div><div style="position:absolute;left:1666px;top:505px;width:62px;height:29px;background:#f8f8fc;"></div><div style="position:absolute;left:1728px;top:505px;width:85px;height:29px;background:#f8f8fc;"></div><div style="position:absolute;left:1813px;top:505px;width:84px;height:29px;background:#f8f8fc;"></div><svg style="position:absolute;left:27px;top:513.0px" width="16" height="10"><path d="M2 2 L7.5 7.5 L13 2" fill="none" stroke="#1f4b87" stroke-width="1.7"/></svg><div class="t" style="left:83px;top:510.0px;color:#2f5288;font-size:13.5px;letter-spacing:-0.4px;">50000</div><div class="t" style="left:242.0px;top:510.0px;width:70px;text-align:center;color:#1a1a1a;font-size:13.5px;letter-spacing:-0.3px;">0.00</div><div class="t" style="left:318px;top:510.0px;color:#1a1a1a;font-size:13.5px;letter-spacing:0.1px;">Artikel Mike</div><div class="t" style="left:519.0px;top:510.0px;width:80px;text-align:center;color:#1a1a1a;font-size:13.5px;letter-spacing:-0.3px;">05.02.26</div><div class="t" style="left:599.0px;top:510.0px;width:91px;text-align:center;color:#1a1a1a;font-size:13.5px;letter-spacing:-0.3px;">00:00</div><div class="t" style="left:690.0px;top:510.0px;width:81px;text-align:center;color:#1a1a1a;font-size:13.5px;letter-spacing:-0.3px;">05.02.26</div><div class="t" style="left:771.0px;top:510.0px;width:93px;text-align:center;color:#1a1a1a;font-size:13.5px;letter-spacing:-0.3px;">00:00</div><div class="t" style="left:864.0px;top:510.0px;width:112px;text-align:center;color:#1a1a1a;font-size:13.5px;letter-spacing:-0.3px;">28.02.2026</div><div class="t" style="left:976.0px;top:510.0px;width:88px;text-align:center;color:#1a1a1a;font-size:13.5px;letter-spacing:-0.3px;">98617791</div><div class="t" style="left:1255px;top:510.0px;color:#1a1a1a;font-size:13.5px;letter-spacing:0.1px;">nicht fertig</div><div class="t" style="left:1377.0px;top:510.0px;width:76px;text-align:center;color:#1a1a1a;font-size:13.5px;letter-spacing:-0.3px;">25</div><div class="t" style="left:1453.0px;top:510.0px;width:75px;text-align:center;color:#1a1a1a;font-size:13.5px;letter-spacing:-0.3px;">0</div><div class="t" style="left:1528.0px;top:510.0px;width:75px;text-align:center;color:#1a1a1a;font-size:13.5px;letter-spacing:-0.3px;">0</div><div class="t" style="left:1603.0px;top:510.0px;width:63px;text-align:center;color:#1a1a1a;font-size:13.5px;letter-spacing:-0.3px;">0:01</div><div class="t" style="left:1666.0px;top:510.0px;width:62px;text-align:center;color:#1a1a1a;font-size:13.5px;letter-spacing:-0.3px;">10:00</div><div class="t" style="left:1728.0px;top:510.0px;width:85px;text-align:center;color:#1a1a1a;font-size:13.5px;letter-spacing:-0.3px;">0:01</div><div class="t" style="left:1813.0px;top:510.0px;width:84px;text-align:center;color:#1a1a1a;font-size:13.5px;letter-spacing:-0.3px;">0:00</div><div style="position:absolute;left:9px;top:534px;width:233px;height:29px;background:#fff;"></div><div style="position:absolute;left:242px;top:534px;width:70px;height:29px;background:#f8f8fc;"></div><div style="position:absolute;left:312px;top:534px;width:207px;height:29px;background:#f8f8fc;"></div><div style="position:absolute;left:519px;top:534px;width:80px;height:29px;background:#f8f8fc;"></div><div style="position:absolute;left:599px;top:534px;width:91px;height:29px;background:#f8f8fc;"></div><div style="position:absolute;left:690px;top:534px;width:81px;height:29px;background:#f8f8fc;"></div><div style="position:absolute;left:771px;top:534px;width:93px;height:29px;background:#f8f8fc;"></div><div style="position:absolute;left:864px;top:534px;width:112px;height:29px;background:#f5807d;"></div><div style="position:absolute;left:976px;top:534px;width:88px;height:29px;background:#f8f8fc;"></div><div style="position:absolute;left:1064px;top:534px;width:185px;height:29px;background:#f8f8fc;"></div><div style="position:absolute;left:1249px;top:534px;width:128px;height:29px;background:#f45444;"></div><div style="position:absolute;left:1377px;top:534px;width:76px;height:29px;background:#f8f8fc;"></div><div style="position:absolute;left:1453px;top:534px;width:75px;height:29px;background:#f8f8fc;"></div><div style="position:absolute;left:1528px;top:534px;width:75px;height:29px;background:#f8f8fc;"></div><div style="position:absolute;left:1603px;top:534px;width:63px;height:29px;background:#f8f8fc;"></div><div style="position:absolute;left:1666px;top:534px;width:62px;height:29px;background:#f8f8fc;"></div><div style="position:absolute;left:1728px;top:534px;width:85px;height:29px;background:#f8f8fc;"></div><div style="position:absolute;left:1813px;top:534px;width:84px;height:29px;background:#f8f8fc;"></div><div style="position:absolute;left:31px;top:535px;width:1px;height:26px;background:#4d72ad;"></div><div style="position:absolute;left:31px;top:548px;width:9px;height:1px;background:#4d72ad;"></div><div class="t" style="left:83px;top:539.0px;color:#2f5288;font-size:13.5px;letter-spacing:-0.4px;">20</div><div class="t" style="left:242.0px;top:539.0px;width:70px;text-align:center;color:#1a1a1a;font-size:13.5px;letter-spacing:-0.3px;">100.00</div><div class="t" style="left:318px;top:539.0px;color:#1a1a1a;font-size:13.5px;letter-spacing:0.1px;">Zuschnitt Lochmaß Ø 160mm</div><div class="t" style="left:519.0px;top:539.0px;width:80px;text-align:center;color:#1a1a1a;font-size:13.5px;letter-spacing:-0.3px;">05.02.26</div><div class="t" style="left:599.0px;top:539.0px;width:91px;text-align:center;color:#1a1a1a;font-size:13.5px;letter-spacing:-0.3px;">03:50</div><div class="t" style="left:690.0px;top:539.0px;width:81px;text-align:center;color:#1a1a1a;font-size:13.5px;letter-spacing:-0.3px;">05.02.26</div><div class="t" style="left:771.0px;top:539.0px;width:93px;text-align:center;color:#1a1a1a;font-size:13.5px;letter-spacing:-0.3px;">08:01</div><div class="t" style="left:864.0px;top:539.0px;width:112px;text-align:center;color:#1a1a1a;font-size:13.5px;letter-spacing:-0.3px;">28.02.2026</div><div class="t" style="left:976.0px;top:539.0px;width:88px;text-align:center;color:#1a1a1a;font-size:13.5px;letter-spacing:-0.3px;">98617791</div><div class="t" style="left:1070px;top:539.0px;color:#1a1a1a;font-size:13.5px;letter-spacing:0.1px;">2002 Säge 2</div><div class="t" style="left:1255px;top:539.0px;color:#1a1a1a;font-size:13.5px;letter-spacing:0.1px;">AVO-Ende</div><div class="t" style="left:1377.0px;top:539.0px;width:76px;text-align:center;color:#1a1a1a;font-size:13.5px;letter-spacing:-0.3px;">25</div><div class="t" style="left:1453.0px;top:539.0px;width:75px;text-align:center;color:#1a1a1a;font-size:13.5px;letter-spacing:-0.3px;">0</div><div class="t" style="left:1528.0px;top:539.0px;width:75px;text-align:center;color:#1a1a1a;font-size:13.5px;letter-spacing:-0.3px;">0</div><div class="t" style="left:1603.0px;top:539.0px;width:63px;text-align:center;color:#1a1a1a;font-size:13.5px;letter-spacing:-0.3px;">0:01</div><div class="t" style="left:1666.0px;top:539.0px;width:62px;text-align:center;color:#1a1a1a;font-size:13.5px;letter-spacing:-0.3px;">10:00</div><div class="t" style="left:1728.0px;top:539.0px;width:85px;text-align:center;color:#1a1a1a;font-size:13.5px;letter-spacing:-0.3px;">0:01</div><div class="t" style="left:1813.0px;top:539.0px;width:84px;text-align:center;color:#1a1a1a;font-size:13.5px;letter-spacing:-0.3px;">0:00</div><div style="position:absolute;left:9px;top:563px;width:233px;height:28px;background:#f6f6f6;"></div><div style="position:absolute;left:242px;top:563px;width:70px;height:28px;background:#f8f8fc;"></div><div style="position:absolute;left:312px;top:563px;width:207px;height:28px;background:#f8f8fc;"></div><div style="position:absolute;left:519px;top:563px;width:80px;height:28px;background:#f8f8fc;"></div><div style="position:absolute;left:599px;top:563px;width:91px;height:28px;background:#f8f8fc;"></div><div style="position:absolute;left:690px;top:563px;width:81px;height:28px;background:#f8f8fc;"></div><div style="position:absolute;left:771px;top:563px;width:93px;height:28px;background:#f8f8fc;"></div><div style="position:absolute;left:864px;top:563px;width:112px;height:28px;background:#f5807d;"></div><div style="position:absolute;left:976px;top:563px;width:88px;height:28px;background:#f8f8fc;"></div><div style="position:absolute;left:1064px;top:563px;width:185px;height:28px;background:#f8f8fc;"></div><div style="position:absolute;left:1249px;top:563px;width:128px;height:28px;background:#fff;"></div><div style="position:absolute;left:1377px;top:563px;width:76px;height:28px;background:#f8f8fc;"></div><div style="position:absolute;left:1453px;top:563px;width:75px;height:28px;background:#f8f8fc;"></div><div style="position:absolute;left:1528px;top:563px;width:75px;height:28px;background:#f8f8fc;"></div><div style="position:absolute;left:1603px;top:563px;width:63px;height:28px;background:#f8f8fc;"></div><div style="position:absolute;left:1666px;top:563px;width:62px;height:28px;background:#f8f8fc;"></div><div style="position:absolute;left:1728px;top:563px;width:85px;height:28px;background:#f8f8fc;"></div><div style="position:absolute;left:1813px;top:563px;width:84px;height:28px;background:#f8f8fc;"></div><div style="position:absolute;left:31px;top:564px;width:1px;height:25px;background:#4d72ad;"></div><div style="position:absolute;left:31px;top:577px;width:9px;height:1px;background:#4d72ad;"></div><div class="t" style="left:83px;top:567.5px;color:#2f5288;font-size:13.5px;letter-spacing:-0.4px;">40</div><div class="t" style="left:242.0px;top:567.5px;width:70px;text-align:center;color:#1a1a1a;font-size:13.5px;letter-spacing:-0.3px;">0.00</div><div class="t" style="left:318px;top:567.5px;color:#1a1a1a;font-size:13.5px;letter-spacing:0.1px;">Montage Baugruppen</div><div class="t" style="left:519.0px;top:567.5px;width:80px;text-align:center;color:#1a1a1a;font-size:13.5px;letter-spacing:-0.3px;">05.02.26</div><div class="t" style="left:599.0px;top:567.5px;width:91px;text-align:center;color:#1a1a1a;font-size:13.5px;letter-spacing:-0.3px;">08:01</div><div class="t" style="left:690.0px;top:567.5px;width:81px;text-align:center;color:#1a1a1a;font-size:13.5px;letter-spacing:-0.3px;">05.02.26</div><div class="t" style="left:771.0px;top:567.5px;width:93px;text-align:center;color:#1a1a1a;font-size:13.5px;letter-spacing:-0.3px;">12:11</div><div class="t" style="left:864.0px;top:567.5px;width:112px;text-align:center;color:#1a1a1a;font-size:13.5px;letter-spacing:-0.3px;">28.02.2026</div><div class="t" style="left:976.0px;top:567.5px;width:88px;text-align:center;color:#1a1a1a;font-size:13.5px;letter-spacing:-0.3px;">98617791</div><div class="t" style="left:1070px;top:567.5px;color:#1a1a1a;font-size:13.5px;letter-spacing:0.1px;">4001 Montage 1</div><div class="t" style="left:1255px;top:567.5px;color:#f0564a;font-size:13.5px;letter-spacing:0.1px;">AVO-Anfang</div><div class="t" style="left:1377.0px;top:567.5px;width:76px;text-align:center;color:#1a1a1a;font-size:13.5px;letter-spacing:-0.3px;">25</div><div class="t" style="left:1453.0px;top:567.5px;width:75px;text-align:center;color:#1a1a1a;font-size:13.5px;letter-spacing:-0.3px;">0</div><div class="t" style="left:1528.0px;top:567.5px;width:75px;text-align:center;color:#1a1a1a;font-size:13.5px;letter-spacing:-0.3px;">0</div><div class="t" style="left:1603.0px;top:567.5px;width:63px;text-align:center;color:#1a1a1a;font-size:13.5px;letter-spacing:-0.3px;">0:00</div><div class="t" style="left:1666.0px;top:567.5px;width:62px;text-align:center;color:#1a1a1a;font-size:13.5px;letter-spacing:-0.3px;">0:00</div><div class="t" style="left:1728.0px;top:567.5px;width:85px;text-align:center;color:#1a1a1a;font-size:13.5px;letter-spacing:-0.3px;">0:00</div><div class="t" style="left:1813.0px;top:567.5px;width:84px;text-align:center;color:#1a1a1a;font-size:13.5px;letter-spacing:-0.3px;">0:00</div><div style="position:absolute;left:9px;top:591px;width:233px;height:29px;background:#fff;"></div><div style="position:absolute;left:242px;top:591px;width:70px;height:29px;background:#f8f8fc;"></div><div style="position:absolute;left:312px;top:591px;width:207px;height:29px;background:#f8f8fc;"></div><div style="position:absolute;left:519px;top:591px;width:80px;height:29px;background:#f8f8fc;"></div><div style="position:absolute;left:599px;top:591px;width:91px;height:29px;background:#f8f8fc;"></div><div style="position:absolute;left:690px;top:591px;width:81px;height:29px;background:#f8f8fc;"></div><div style="position:absolute;left:771px;top:591px;width:93px;height:29px;background:#f8f8fc;"></div><div style="position:absolute;left:864px;top:591px;width:112px;height:29px;background:#f5807d;"></div><div style="position:absolute;left:976px;top:591px;width:88px;height:29px;background:#f8f8fc;"></div><div style="position:absolute;left:1064px;top:591px;width:185px;height:29px;background:#f8f8fc;"></div><div style="position:absolute;left:1249px;top:591px;width:128px;height:29px;background:#fff;"></div><div style="position:absolute;left:1377px;top:591px;width:76px;height:29px;background:#f8f8fc;"></div><div style="position:absolute;left:1453px;top:591px;width:75px;height:29px;background:#f8f8fc;"></div><div style="position:absolute;left:1528px;top:591px;width:75px;height:29px;background:#f8f8fc;"></div><div style="position:absolute;left:1603px;top:591px;width:63px;height:29px;background:#f8f8fc;"></div><div style="position:absolute;left:1666px;top:591px;width:62px;height:29px;background:#f8f8fc;"></div><div style="position:absolute;left:1728px;top:591px;width:85px;height:29px;background:#f8f8fc;"></div><div style="position:absolute;left:1813px;top:591px;width:84px;height:29px;background:#f8f8fc;"></div><div style="position:absolute;left:31px;top:592px;width:1px;height:26px;background:#4d72ad;"></div><div style="position:absolute;left:31px;top:606px;width:9px;height:1px;background:#4d72ad;"></div><div class="t" style="left:83px;top:596.0px;color:#2f5288;font-size:13.5px;letter-spacing:-0.4px;">60</div><div class="t" style="left:242.0px;top:596.0px;width:70px;text-align:center;color:#1a1a1a;font-size:13.5px;letter-spacing:-0.3px;">0.00</div><div class="t" style="left:318px;top:596.0px;color:#1a1a1a;font-size:13.5px;letter-spacing:0.1px;">Systemtest</div><div class="t" style="left:519.0px;top:596.0px;width:80px;text-align:center;color:#1a1a1a;font-size:13.5px;letter-spacing:-0.3px;">05.02.26</div><div class="t" style="left:599.0px;top:596.0px;width:91px;text-align:center;color:#1a1a1a;font-size:13.5px;letter-spacing:-0.3px;">12:11</div><div class="t" style="left:690.0px;top:596.0px;width:81px;text-align:center;color:#1a1a1a;font-size:13.5px;letter-spacing:-0.3px;">05.02.26</div><div class="t" style="left:771.0px;top:596.0px;width:93px;text-align:center;color:#1a1a1a;font-size:13.5px;letter-spacing:-0.3px;">16:21</div><div class="t" style="left:864.0px;top:596.0px;width:112px;text-align:center;color:#1a1a1a;font-size:13.5px;letter-spacing:-0.3px;">28.02.2026</div><div class="t" style="left:976.0px;top:596.0px;width:88px;text-align:center;color:#1a1a1a;font-size:13.5px;letter-spacing:-0.3px;">98617791</div><div class="t" style="left:1070px;top:596.0px;color:#1a1a1a;font-size:13.5px;letter-spacing:0.1px;">6001 Qualitätssicherung 1</div><div class="t" style="left:1377.0px;top:596.0px;width:76px;text-align:center;color:#1a1a1a;font-size:13.5px;letter-spacing:-0.3px;">25</div><div class="t" style="left:1453.0px;top:596.0px;width:75px;text-align:center;color:#1a1a1a;font-size:13.5px;letter-spacing:-0.3px;">0</div><div class="t" style="left:1528.0px;top:596.0px;width:75px;text-align:center;color:#1a1a1a;font-size:13.5px;letter-spacing:-0.3px;">0</div><div class="t" style="left:1603.0px;top:596.0px;width:63px;text-align:center;color:#1a1a1a;font-size:13.5px;letter-spacing:-0.3px;">0:00</div><div class="t" style="left:1666.0px;top:596.0px;width:62px;text-align:center;color:#1a1a1a;font-size:13.5px;letter-spacing:-0.3px;">0:00</div><div class="t" style="left:1728.0px;top:596.0px;width:85px;text-align:center;color:#1a1a1a;font-size:13.5px;letter-spacing:-0.3px;">0:00</div><div class="t" style="left:1813.0px;top:596.0px;width:84px;text-align:center;color:#1a1a1a;font-size:13.5px;letter-spacing:-0.3px;">0:00</div><div style="position:absolute;left:9px;top:620px;width:233px;height:29px;background:#f6f6f6;"></div><div style="position:absolute;left:242px;top:620px;width:70px;height:29px;background:#f8f8fc;"></div><div style="position:absolute;left:312px;top:620px;width:207px;height:29px;background:#f8f8fc;"></div><div style="position:absolute;left:519px;top:620px;width:80px;height:29px;background:#f8f8fc;"></div><div style="position:absolute;left:599px;top:620px;width:91px;height:29px;background:#f8f8fc;"></div><div style="position:absolute;left:690px;top:620px;width:81px;height:29px;background:#f8f8fc;"></div><div style="position:absolute;left:771px;top:620px;width:93px;height:29px;background:#f8f8fc;"></div><div style="position:absolute;left:864px;top:620px;width:112px;height:29px;background:#f5807d;"></div><div style="position:absolute;left:976px;top:620px;width:88px;height:29px;background:#f8f8fc;"></div><div style="position:absolute;left:1064px;top:620px;width:185px;height:29px;background:#f6f6f6;"></div><div style="position:absolute;left:1249px;top:620px;width:128px;height:29px;background:#f8f8fc;"></div><div style="position:absolute;left:1377px;top:620px;width:76px;height:29px;background:#f8f8fc;"></div><div style="position:absolute;left:1453px;top:620px;width:75px;height:29px;background:#f8f8fc;"></div><div style="position:absolute;left:1528px;top:620px;width:75px;height:29px;background:#f8f8fc;"></div><div style="position:absolute;left:1603px;top:620px;width:63px;height:29px;background:#f8f8fc;"></div><div style="position:absolute;left:1666px;top:620px;width:62px;height:29px;background:#f8f8fc;"></div><div style="position:absolute;left:1728px;top:620px;width:85px;height:29px;background:#f8f8fc;"></div><div style="position:absolute;left:1813px;top:620px;width:84px;height:29px;background:#f8f8fc;"></div><svg style="position:absolute;left:27px;top:625.5px" width="12" height="16"><path d="M3 2 L8.5 7.8 L3 13.6" fill="none" stroke="#1f4b87" stroke-width="1.7"/></svg><div class="t" style="left:83px;top:625.0px;color:#2f5288;font-size:13.5px;letter-spacing:-0.4px;">400202</div><div class="t" style="left:242.0px;top:625.0px;width:70px;text-align:center;color:#1a1a1a;font-size:13.5px;letter-spacing:-0.3px;">0.00</div><div class="t" style="left:318px;top:625.0px;color:#1a1a1a;font-size:13.5px;letter-spacing:0.1px;">Artikel Kilo</div><div class="t" style="left:519.0px;top:625.0px;width:80px;text-align:center;color:#1a1a1a;font-size:13.5px;letter-spacing:-0.3px;">04.12.25</div><div class="t" style="left:599.0px;top:625.0px;width:91px;text-align:center;color:#1a1a1a;font-size:13.5px;letter-spacing:-0.3px;">00:00</div><div class="t" style="left:690.0px;top:625.0px;width:81px;text-align:center;color:#1a1a1a;font-size:13.5px;letter-spacing:-0.3px;">06.02.26</div><div class="t" style="left:771.0px;top:625.0px;width:93px;text-align:center;color:#1a1a1a;font-size:13.5px;letter-spacing:-0.3px;">00:00</div><div class="t" style="left:864.0px;top:625.0px;width:112px;text-align:center;color:#1a1a1a;font-size:13.5px;letter-spacing:-0.3px;">01.02.2026</div><div class="t" style="left:976.0px;top:625.0px;width:88px;text-align:center;color:#1a1a1a;font-size:13.5px;letter-spacing:-0.3px;">71698211</div><div class="t" style="left:1255px;top:625.0px;color:#1a1a1a;font-size:13.5px;letter-spacing:0.1px;">nicht fertig</div><div class="t" style="left:1377.0px;top:625.0px;width:76px;text-align:center;color:#1a1a1a;font-size:13.5px;letter-spacing:-0.3px;">25</div><div class="t" style="left:1453.0px;top:625.0px;width:75px;text-align:center;color:#1a1a1a;font-size:13.5px;letter-spacing:-0.3px;">0</div><div class="t" style="left:1528.0px;top:625.0px;width:75px;text-align:center;color:#1a1a1a;font-size:13.5px;letter-spacing:-0.3px;">0</div><div class="t" style="left:1603.0px;top:625.0px;width:63px;text-align:center;color:#1a1a1a;font-size:13.5px;letter-spacing:-0.3px;">11:20</div><div class="t" style="left:1666.0px;top:625.0px;width:62px;text-align:center;color:#1a1a1a;font-size:13.5px;letter-spacing:-0.3px;">9:30</div><div class="t" style="left:1728.0px;top:625.0px;width:85px;text-align:center;color:#1a1a1a;font-size:13.5px;letter-spacing:-0.3px;">3:00</div><div class="t" style="left:1813.0px;top:625.0px;width:84px;text-align:center;color:#1a1a1a;font-size:13.5px;letter-spacing:-0.3px;">0:00</div><div style="position:absolute;left:242px;top:274px;width:1px;height:375px;background:#d9dfe8;"></div><div style="position:absolute;left:312px;top:274px;width:1px;height:375px;background:#d9dfe8;"></div><div style="position:absolute;left:519px;top:274px;width:1px;height:375px;background:#d9dfe8;"></div><div style="position:absolute;left:599px;top:274px;width:1px;height:375px;background:#d9dfe8;"></div><div style="position:absolute;left:690px;top:274px;width:1px;height:375px;background:#d9dfe8;"></div><div style="position:absolute;left:771px;top:274px;width:1px;height:375px;background:#d9dfe8;"></div><div style="position:absolute;left:864px;top:274px;width:1px;height:375px;background:#d9dfe8;"></div><div style="position:absolute;left:976px;top:274px;width:1px;height:375px;background:#d9dfe8;"></div><div style="position:absolute;left:1064px;top:274px;width:1px;height:375px;background:#d9dfe8;"></div><div style="position:absolute;left:1249px;top:274px;width:1px;height:375px;background:#d9dfe8;"></div><div style="position:absolute;left:1377px;top:274px;width:1px;height:375px;background:#d9dfe8;"></div><div style="position:absolute;left:1453px;top:274px;width:1px;height:375px;background:#d9dfe8;"></div><div style="position:absolute;left:1528px;top:274px;width:1px;height:375px;background:#d9dfe8;"></div><div style="position:absolute;left:1603px;top:274px;width:1px;height:375px;background:#d9dfe8;"></div><div style="position:absolute;left:1666px;top:274px;width:1px;height:375px;background:#d9dfe8;"></div><div style="position:absolute;left:1728px;top:274px;width:1px;height:375px;background:#d9dfe8;"></div><div style="position:absolute;left:1813px;top:274px;width:1px;height:375px;background:#d9dfe8;"></div><div style="position:absolute;left:1897px;top:274px;width:1px;height:375px;background:#d9dfe8;"></div><div class="t" style="left:24px;top:668px;color:#1f4b87;font-weight:bold;font-size:14.5px;">Rückmeldungen</div><div class="t" style="left:166px;top:668px;color:#1f4b87;font-weight:bold;font-size:14.5px;">Arbeitsgang</div><div class="t" style="left:280px;top:668px;color:#1f4b87;font-weight:bold;font-size:14.5px;">Abfolge</div><div class="t" style="left:362px;top:668px;color:#1f4b87;font-weight:bold;font-size:14.5px;">Infos</div><div class="t" style="left:427px;top:668px;color:#1f4b87;font-weight:bold;font-size:14.5px;">Bedienfaktor</div><div style="position:absolute;left:9px;top:693px;width:1890px;height:1px;background:#d3dce8;"></div><div style="position:absolute;left:9px;top:691.7px;width:142px;height:1.4px;background:#234e87;"></div><svg style="position:absolute;left:23px;top:716px" width="288" height="36"><path d="M0 16 L89 16 L97 0 L286 0 Q288 0 288 2 L288 36 L0 36 Z" fill="#e5f3fd"/></svg><div class="t" style="left:31px;top:712.5px;color:#7f9dc7;font-size:13.5px;letter-spacing:-0.1px;">Spaltenfilter</div><div class="t" style="left:31px;top:732px;color:#273d5e;font-size:13px;letter-spacing:0.25px;">Datum, Mitarbeiter, Arbeitsplatz, Funk…</div><svg style="position:absolute;left:295px;top:716px" width="10" height="36"><path d="M1.8 12.8 L5 9.6 L8.2 12.8" fill="none" stroke="#1f4b87" stroke-width="1.1"/><path d="M1.8 24.3 L5 27.5 L8.2 24.3" fill="none" stroke="#1f4b87" stroke-width="1.1"/></svg><svg style="position:absolute;left:326px;top:716px" width="144" height="36"><path d="M0 16 L71 16 L79 0 L142 0 Q144 0 144 2 L144 36 L0 36 Z" fill="#e5f3fd"/></svg><div class="t" style="left:334px;top:712.5px;color:#7f9dc7;font-size:13.5px;letter-spacing:-0.1px;">Resultate</div><div class="t" style="left:334px;top:732px;color:#273d5e;font-size:13px;">50</div><svg style="position:absolute;left:454px;top:716px" width="10" height="36"><path d="M1.8 12.8 L5 9.6 L8.2 12.8" fill="none" stroke="#1f4b87" stroke-width="1.1"/><path d="M1.8 24.3 L5 27.5 L8.2 24.3" fill="none" stroke="#1f4b87" stroke-width="1.1"/></svg><svg style="position:absolute;left:1611px;top:716px" width="287" height="36"><path d="M0 16 L59 16 L67 0 L285 0 Q287 0 287 2 L287 36 L0 36 Z" fill="#e5f3fd"/></svg><div class="t" style="left:1619px;top:712.5px;color:#7f9dc7;font-size:13.5px;letter-spacing:-0.1px;">Suchen</div><div class="t" style="left:1619px;top:732.8px;color:#5a6470;font-style:italic;font-size:14px;letter-spacing:-0.2px;">Suchen</div><div style="position:absolute;left:23px;top:773px;width:34px;height:34px;border:1px solid #1f4b87;border-radius:2px;background:#fff;"><svg width="34" height="34" style="position:absolute;left:0;top:0"><path d="M10.8 11.2 L25 11.2 L19.3 17.8 L18.6 22.6 L17.2 22.6 L16.5 17.8 Z" fill="none" stroke="#1f4b87" stroke-width="1" stroke-linejoin="round"/></svg></div><div style="position:absolute;left:23px;top:824px;width:1875px;height:56px;background:#d9e0ea;"></div><div style="position:absolute;left:55px;top:841px;width:19px;height:19px;border:1px solid #1f4b87;border-radius:2px;background:#fff;"><svg width="19" height="19" style="position:absolute;left:0;top:0"><path d="M2.6 4 L16.4 4 L10.9 10.3 L10.2 15.6 L8.8 15.6 L8.1 10.3 Z" fill="none" stroke="#1f4b87" stroke-width="1" stroke-linejoin="round"/></svg></div><svg style="position:absolute;left:162.0px;top:827px" width="9" height="34"><path d="M0.5 8 L4.5 0.5 L8.5 8 Z M0.5 25 L4.5 32.5 L8.5 25 Z" fill="#b5c1d3"/></svg><div class="t" style="left:94.0px;top:842px;width:76px;text-align:center;color:#1f4b87;font-weight:bold;font-size:14px;letter-spacing:-0.3px;">Datum</div><svg style="position:absolute;left:327.0px;top:827px" width="9" height="34"><path d="M0.5 8 L4.5 0.5 L8.5 8 Z M0.5 25 L4.5 32.5 L8.5 25 Z" fill="#b5c1d3"/></svg><div class="t" style="left:170.0px;top:842px;width:165px;text-align:center;color:#1f4b87;font-weight:bold;font-size:14px;letter-spacing:-0.3px;">Mitarbeiter</div><svg style="position:absolute;left:449.0px;top:827px" width="9" height="34"><path d="M0.5 8 L4.5 0.5 L8.5 8 Z M0.5 25 L4.5 32.5 L8.5 25 Z" fill="#b5c1d3"/></svg><div class="t" style="left:335.0px;top:842px;width:122px;text-align:center;color:#1f4b87;font-weight:bold;font-size:14px;letter-spacing:-0.3px;">Arbeitsplatz</div><svg style="position:absolute;left:642.0px;top:827px" width="9" height="34"><path d="M0.5 8 L4.5 0.5 L8.5 8 Z M0.5 25 L4.5 32.5 L8.5 25 Z" fill="#b5c1d3"/></svg><div class="t" style="left:472px;top:842px;color:#1f4b87;font-weight:bold;font-size:14px;letter-spacing:-0.3px;">Funktion</div><svg style="position:absolute;left:708.0px;top:827px" width="9" height="34"><path d="M0.5 8 L4.5 0.5 L8.5 8 Z M0.5 25 L4.5 32.5 L8.5 25 Z" fill="#b5c1d3"/></svg><div class="t" style="left:664px;top:855px;color:#1f4b87;font-weight:bold;font-size:14px;letter-spacing:-0.3px;">Stör.</div><div style="position:absolute;left:664px;top:877px;width:29px;height:2px;background:#ec5340;"></div><svg style="position:absolute;left:774.0px;top:827px" width="9" height="34"><path d="M0.5 8 L4.5 0.5 L8.5 8 Z M0.5 25 L4.5 32.5 L8.5 25 Z" fill="#b5c1d3"/></svg><div class="t" style="left:730px;top:855px;color:#1f4b87;font-weight:bold;font-size:14px;letter-spacing:-0.3px;">Info.</div><div style="position:absolute;left:730px;top:877px;width:29px;height:2px;background:#ec5340;"></div><svg style="position:absolute;left:832.0px;top:827px" width="9" height="34"><path d="M0.5 8 L4.5 0.5 L8.5 8 Z M0.5 25 L4.5 32.5 L8.5 25 Z" fill="#b5c1d3"/></svg><div class="t" style="left:796px;top:855px;color:#1f4b87;font-weight:bold;font-size:14px;letter-spacing:-0.3px;">Err.</div><div style="position:absolute;left:796px;top:877px;width:23px;height:2px;background:#ec5340;"></div><svg style="position:absolute;left:896.0px;top:827px" width="9" height="34"><path d="M0.5 8 L4.5 0.5 L8.5 8 Z M0.5 25 L4.5 32.5 L8.5 25 Z" fill="#b5c1d3"/></svg><div class="t" style="left:854px;top:855px;color:#1f4b87;font-weight:bold;font-size:14px;letter-spacing:-0.3px;">Unt.</div><div style="position:absolute;left:854px;top:877px;width:28px;height:2px;background:#ec5340;"></div><svg style="position:absolute;left:989.0px;top:827px" width="9" height="34"><path d="M0.5 8 L4.5 0.5 L8.5 8 Z M0.5 25 L4.5 32.5 L8.5 25 Z" fill="#b5c1d3"/></svg><div class="t" style="left:904.0px;top:842px;width:93px;text-align:center;color:#1f4b87;font-weight:bold;font-size:14px;letter-spacing:-0.3px;">von-Zeit</div><svg style="position:absolute;left:1077.0px;top:827px" width="9" height="34"><path d="M0.5 8 L4.5 0.5 L8.5 8 Z M0.5 25 L4.5 32.5 L8.5 25 Z" fill="#b5c1d3"/></svg><div class="t" style="left:997.0px;top:842px;width:88px;text-align:center;color:#1f4b87;font-weight:bold;font-size:14px;letter-spacing:-0.3px;">bis-Zeit</div><svg style="position:absolute;left:1153.0px;top:827px" width="9" height="34"><path d="M0.5 8 L4.5 0.5 L8.5 8 Z M0.5 25 L4.5 32.5 L8.5 25 Z" fill="#b5c1d3"/></svg><div class="t" style="left:1085.0px;top:842px;width:76px;text-align:center;color:#1f4b87;font-weight:bold;font-size:14px;letter-spacing:-0.3px;">Pause</div><svg style="position:absolute;left:1254.0px;top:827px" width="9" height="34"><path d="M0.5 8 L4.5 0.5 L8.5 8 Z M0.5 25 L4.5 32.5 L8.5 25 Z" fill="#b5c1d3"/></svg><div class="t" style="left:1161.0px;top:842px;width:101px;text-align:center;color:#1f4b87;font-weight:bold;font-size:14px;letter-spacing:-0.3px;">Nettozeit</div><svg style="position:absolute;left:1380.0px;top:827px" width="9" height="34"><path d="M0.5 8 L4.5 0.5 L8.5 8 Z M0.5 25 L4.5 32.5 L8.5 25 Z" fill="#b5c1d3"/></svg><div class="t" style="left:1262.0px;top:842px;width:126px;text-align:center;color:#1f4b87;font-weight:bold;font-size:14px;letter-spacing:-0.3px;">Bedienanteil</div><svg style="position:absolute;left:1488.0px;top:827px" width="9" height="34"><path d="M0.5 8 L4.5 0.5 L8.5 8 Z M0.5 25 L4.5 32.5 L8.5 25 Z" fill="#b5c1d3"/></svg><div class="t" style="left:1388.0px;top:842px;width:108px;text-align:center;color:#1f4b87;font-weight:bold;font-size:14px;letter-spacing:-0.3px;">Gutmenge</div><svg style="position:absolute;left:1594.0px;top:827px" width="9" height="34"><path d="M0.5 8 L4.5 0.5 L8.5 8 Z M0.5 25 L4.5 32.5 L8.5 25 Z" fill="#b5c1d3"/></svg><div class="t" style="left:1496.0px;top:842px;width:106px;text-align:center;color:#1f4b87;font-weight:bold;font-size:14px;letter-spacing:-0.3px;">fehlerhaft</div><svg style="position:absolute;left:1662.0px;top:827px" width="9" height="34"><path d="M0.5 8 L4.5 0.5 L8.5 8 Z M0.5 25 L4.5 32.5 L8.5 25 Z" fill="#b5c1d3"/></svg><div class="t" style="left:1616px;top:855px;color:#1f4b87;font-weight:bold;font-size:14px;letter-spacing:-0.3px;">Fehl.</div><div style="position:absolute;left:1616px;top:877px;width:31px;height:2px;background:#ec5340;"></div><svg style="position:absolute;left:1772.0px;top:827px" width="9" height="34"><path d="M0.5 8 L4.5 0.5 L8.5 8 Z M0.5 25 L4.5 32.5 L8.5 25 Z" fill="#b5c1d3"/></svg><div class="t" style="left:1670.0px;top:828px;width:110px;text-align:center;color:#1f4b87;font-weight:bold;font-size:14px;letter-spacing:-0.3px;">Sach-</div><div class="t" style="left:1670.0px;top:855px;width:110px;text-align:center;color:#1f4b87;font-weight:bold;font-size:14px;letter-spacing:-0.3px;">bearbeiter</div><svg style="position:absolute;left:1880.0px;top:827px" width="9" height="34"><path d="M0.5 8 L4.5 0.5 L8.5 8 Z M0.5 25 L4.5 32.5 L8.5 25 Z" fill="#b5c1d3"/></svg><div class="t" style="left:1780.0px;top:828px;width:108px;text-align:center;color:#1f4b87;font-weight:bold;font-size:14px;letter-spacing:-0.3px;">Schrott</div><div class="t" style="left:1780.0px;top:855px;width:108px;text-align:center;color:#1f4b87;font-weight:bold;font-size:14px;letter-spacing:-0.3px;">Ausschuss</div><div style="position:absolute;left:23px;top:880px;width:27px;height:30px;background:#f6f6f6;"></div><div style="position:absolute;left:50px;top:880px;width:54px;height:30px;background:#f6f6f6;"></div><div style="position:absolute;left:104px;top:880px;width:76px;height:30px;background:#f8f8fc;"></div><div style="position:absolute;left:180px;top:880px;width:165px;height:30px;background:#f8f8fc;"></div><div style="position:absolute;left:345px;top:880px;width:122px;height:30px;background:#ebebeb;"></div><div style="position:absolute;left:467px;top:880px;width:193px;height:30px;background:#ffff00;"></div><div style="position:absolute;left:660px;top:880px;width:66px;height:30px;background:#fff;"></div><div style="position:absolute;left:726px;top:880px;width:66px;height:30px;background:#fff;"></div><div style="position:absolute;left:792px;top:880px;width:58px;height:30px;background:#f8f8fc;"></div><div style="position:absolute;left:850px;top:880px;width:64px;height:30px;background:#fff;"></div><div style="position:absolute;left:914px;top:880px;width:93px;height:30px;background:#ebebeb;"></div><div style="position:absolute;left:1007px;top:880px;width:88px;height:30px;background:#ebebeb;"></div><div style="position:absolute;left:1095px;top:880px;width:76px;height:30px;background:#f8f8fc;"></div><div style="position:absolute;left:1171px;top:880px;width:101px;height:30px;background:#d1d0c4;"></div><div style="position:absolute;left:1272px;top:880px;width:126px;height:30px;background:#d1d0c4;"></div><div style="position:absolute;left:1398px;top:880px;width:108px;height:30px;background:#ebebeb;"></div><div style="position:absolute;left:1506px;top:880px;width:106px;height:30px;background:#ebebeb;"></div><div style="position:absolute;left:1612px;top:880px;width:68px;height:30px;background:#fff;"></div><div style="position:absolute;left:1680px;top:880px;width:110px;height:30px;background:#f8f8fc;"></div><div style="position:absolute;left:1790px;top:880px;width:108px;height:30px;background:#ebebeb;"></div><div style="position:absolute;left:57px;top:884.7px;width:20px;height:19px;border:1px solid #1f4b87;border-radius:2px;background:#fff;"><svg width="19" height="19" style="position:absolute;left:0;top:0"><path d="M4 5.2 L16 5.2 M4 9.6 L16 9.6 M4 14 L16 14" stroke="#1f4b87" stroke-width="1.6"/></svg></div><div class="t" style="left:108px;top:885.0px;color:#1a1a1a;font-size:13.5px;letter-spacing:-0.3px;">08.01.2026</div><div class="t" style="left:180.5px;top:885.0px;width:164px;text-align:center;color:#1a1a1a;font-size:13.5px;letter-spacing:-0.1px;">Ball, Baptist (002)</div><div class="t" style="left:345.0px;top:885.0px;width:122px;text-align:center;color:#1a1a1a;font-size:13.5px;letter-spacing:-0.3px;">3001</div><div class="t" style="left:471px;top:885.0px;color:#1a1a1a;font-size:13.5px;">14 Nacharbeit Ende</div><div class="t" style="left:913.0px;top:885.0px;width:93px;text-align:center;color:#1a1a1a;font-size:13.5px;letter-spacing:-0.3px;">14:00</div><div class="t" style="left:1006.0px;top:885.0px;width:88px;text-align:center;color:#1a1a1a;font-size:13.5px;letter-spacing:-0.3px;">16:00</div><div class="t" style="left:1170.0px;top:885.0px;width:101px;text-align:center;color:#1a1a1a;font-size:13.5px;letter-spacing:-0.3px;">2:00</div><div class="t" style="left:1271.0px;top:885.0px;width:126px;text-align:center;color:#1a1a1a;font-size:13.5px;letter-spacing:-0.3px;">2:00</div><div class="t" style="left:1397.0px;top:885.0px;width:108px;text-align:center;color:#1a1a1a;font-size:13.5px;letter-spacing:-0.3px;">5</div><div class="t" style="left:1679.0px;top:885.0px;width:110px;text-align:center;color:#1a1a1a;font-size:13.5px;">Demo</div><div style="position:absolute;left:23px;top:910px;width:27px;height:30px;background:#fff;"></div><div style="position:absolute;left:50px;top:910px;width:54px;height:30px;background:#fff;"></div><div style="position:absolute;left:104px;top:910px;width:76px;height:30px;background:#f8f8fc;"></div><div style="position:absolute;left:180px;top:910px;width:165px;height:30px;background:#f8f8fc;"></div><div style="position:absolute;left:345px;top:910px;width:122px;height:30px;background:#ebebeb;"></div><div style="position:absolute;left:467px;top:910px;width:193px;height:30px;background:#55ff00;"></div><div style="position:absolute;left:660px;top:910px;width:66px;height:30px;background:#fff;"></div><div style="position:absolute;left:726px;top:910px;width:66px;height:30px;background:#fff;"></div><div style="position:absolute;left:792px;top:910px;width:58px;height:30px;background:#f8f8fc;"></div><div style="position:absolute;left:850px;top:910px;width:64px;height:30px;background:#fff;"></div><div style="position:absolute;left:914px;top:910px;width:93px;height:30px;background:#ebebeb;"></div><div style="position:absolute;left:1007px;top:910px;width:88px;height:30px;background:#ebebeb;"></div><div style="position:absolute;left:1095px;top:910px;width:76px;height:30px;background:#f8f8fc;"></div><div style="position:absolute;left:1171px;top:910px;width:101px;height:30px;background:#d1d0c4;"></div><div style="position:absolute;left:1272px;top:910px;width:126px;height:30px;background:#d1d0c4;"></div><div style="position:absolute;left:1398px;top:910px;width:108px;height:30px;background:#ebebeb;"></div><div style="position:absolute;left:1506px;top:910px;width:106px;height:30px;background:#ebebeb;"></div><div style="position:absolute;left:1612px;top:910px;width:68px;height:30px;background:#fff;"></div><div style="position:absolute;left:1680px;top:910px;width:110px;height:30px;background:#f8f8fc;"></div><div style="position:absolute;left:1790px;top:910px;width:108px;height:30px;background:#ebebeb;"></div><div style="position:absolute;left:57px;top:914.7px;width:20px;height:19px;border:1px solid #1f4b87;border-radius:2px;background:#fff;"><svg width="19" height="19" style="position:absolute;left:0;top:0"><path d="M4 5.2 L16 5.2 M4 9.6 L16 9.6 M4 14 L16 14" stroke="#1f4b87" stroke-width="1.6"/></svg></div><div class="t" style="left:108px;top:915.0px;color:#1a1a1a;font-size:13.5px;letter-spacing:-0.3px;">07.01.2026</div><div class="t" style="left:180.5px;top:915.0px;width:164px;text-align:center;color:#1a1a1a;font-size:13.5px;letter-spacing:-0.1px;">Ball, Baptist (002)</div><div class="t" style="left:345.0px;top:915.0px;width:122px;text-align:center;color:#1a1a1a;font-size:13.5px;letter-spacing:-0.3px;">3001</div><div class="t" style="left:471px;top:915.0px;color:#1a1a1a;font-size:13.5px;">12 AVO Ende</div><div class="t" style="left:913.0px;top:915.0px;width:93px;text-align:center;color:#1a1a1a;font-size:13.5px;letter-spacing:-0.3px;">20:00</div><div class="t" style="left:1006.0px;top:915.0px;width:88px;text-align:center;color:#1a1a1a;font-size:13.5px;letter-spacing:-0.3px;">22:00</div><div class="t" style="left:1170.0px;top:915.0px;width:101px;text-align:center;color:#1a1a1a;font-size:13.5px;letter-spacing:-0.3px;">2:00</div><div class="t" style="left:1397.0px;top:915.0px;width:108px;text-align:center;color:#1a1a1a;font-size:13.5px;letter-spacing:-0.3px;">20</div><div class="t" style="left:1505.0px;top:915.0px;width:106px;text-align:center;color:#1a1a1a;font-size:13.5px;letter-spacing:-0.3px;">5</div><div class="t" style="left:1679.0px;top:915.0px;width:110px;text-align:center;color:#1a1a1a;font-size:13.5px;">Demo</div><div style="position:absolute;left:23px;top:940px;width:27px;height:30px;background:#f6f6f6;"></div><div style="position:absolute;left:50px;top:940px;width:54px;height:30px;background:#f6f6f6;"></div><div style="position:absolute;left:104px;top:940px;width:76px;height:30px;background:#f8f8fc;"></div><div style="position:absolute;left:180px;top:940px;width:165px;height:30px;background:#f8f8fc;"></div><div style="position:absolute;left:345px;top:940px;width:122px;height:30px;background:#ebebeb;"></div><div style="position:absolute;left:467px;top:940px;width:193px;height:30px;background:#b3ffa7;"></div><div style="position:absolute;left:660px;top:940px;width:66px;height:30px;background:#fff;"></div><div style="position:absolute;left:726px;top:940px;width:66px;height:30px;background:#fff;"></div><div style="position:absolute;left:792px;top:940px;width:58px;height:30px;background:#f8f8fc;"></div><div style="position:absolute;left:850px;top:940px;width:64px;height:30px;background:#f6f6f6;"></div><div style="position:absolute;left:914px;top:940px;width:93px;height:30px;background:#ebebeb;"></div><div style="position:absolute;left:1007px;top:940px;width:88px;height:30px;background:#ebebeb;"></div><div style="position:absolute;left:1095px;top:940px;width:76px;height:30px;background:#f8f8fc;"></div><div style="position:absolute;left:1171px;top:940px;width:101px;height:30px;background:#d1d0c4;"></div><div style="position:absolute;left:1272px;top:940px;width:126px;height:30px;background:#d1d0c4;"></div><div style="position:absolute;left:1398px;top:940px;width:108px;height:30px;background:#ebebeb;"></div><div style="position:absolute;left:1506px;top:940px;width:106px;height:30px;background:#ebebeb;"></div><div style="position:absolute;left:1612px;top:940px;width:68px;height:30px;background:#fff;"></div><div style="position:absolute;left:1680px;top:940px;width:110px;height:30px;background:#f8f8fc;"></div><div style="position:absolute;left:1790px;top:940px;width:108px;height:30px;background:#ebebeb;"></div><div style="position:absolute;left:57px;top:944.7px;width:20px;height:19px;border:1px solid #1f4b87;border-radius:2px;background:#fff;"><svg width="19" height="19" style="position:absolute;left:0;top:0"><path d="M4 5.2 L16 5.2 M4 9.6 L16 9.6 M4 14 L16 14" stroke="#1f4b87" stroke-width="1.6"/></svg></div><div class="t" style="left:108px;top:945.0px;color:#1a1a1a;font-size:13.5px;letter-spacing:-0.3px;">06.01.2026</div><div class="t" style="left:180.5px;top:945.0px;width:164px;text-align:center;color:#1a1a1a;font-size:13.5px;letter-spacing:-0.1px;">Sonntag, Lena (005)</div><div class="t" style="left:345.0px;top:945.0px;width:122px;text-align:center;color:#1a1a1a;font-size:13.5px;letter-spacing:-0.3px;">3001</div><div class="t" style="left:471px;top:945.0px;color:#1a1a1a;font-size:13.5px;">11 AVO Unterbrechung</div><div style="position:absolute;left:872px;top:947.0px;width:16px;height:16px;background:#cfcfcf;border-radius:50%;"></div><div class="t" style="left:913.0px;top:945.0px;width:93px;text-align:center;color:#1a1a1a;font-size:13.5px;letter-spacing:-0.3px;">18:30</div><div class="t" style="left:1006.0px;top:945.0px;width:88px;text-align:center;color:#1a1a1a;font-size:13.5px;letter-spacing:-0.3px;">22:00</div><div class="t" style="left:1170.0px;top:945.0px;width:101px;text-align:center;color:#1a1a1a;font-size:13.5px;letter-spacing:-0.3px;">3:30</div><div class="t" style="left:1271.0px;top:945.0px;width:126px;text-align:center;color:#1a1a1a;font-size:13.5px;letter-spacing:-0.3px;">3:30</div><div class="t" style="left:1397.0px;top:945.0px;width:108px;text-align:center;color:#1a1a1a;font-size:13.5px;letter-spacing:-0.3px;">30</div><div class="t" style="left:1679.0px;top:945.0px;width:110px;text-align:center;color:#1a1a1a;font-size:13.5px;">Demo</div><div style="position:absolute;left:23px;top:970px;width:27px;height:30px;background:#fff;"></div><div style="position:absolute;left:50px;top:970px;width:54px;height:30px;background:#fff;"></div><div style="position:absolute;left:104px;top:970px;width:76px;height:30px;background:#f8f8fc;"></div><div style="position:absolute;left:180px;top:970px;width:165px;height:30px;background:#f8f8fc;"></div><div style="position:absolute;left:345px;top:970px;width:122px;height:30px;background:#ebebeb;"></div><div style="position:absolute;left:467px;top:970px;width:193px;height:30px;background:#b3ffa7;"></div><div style="position:absolute;left:660px;top:970px;width:66px;height:30px;background:#fff;"></div><div style="position:absolute;left:726px;top:970px;width:66px;height:30px;background:#fff;"></div><div style="position:absolute;left:792px;top:970px;width:58px;height:30px;background:#f8f8fc;"></div><div style="position:absolute;left:850px;top:970px;width:64px;height:30px;background:#fff;"></div><div style="position:absolute;left:914px;top:970px;width:93px;height:30px;background:#ebebeb;"></div><div style="position:absolute;left:1007px;top:970px;width:88px;height:30px;background:#ebebeb;"></div><div style="position:absolute;left:1095px;top:970px;width:76px;height:30px;background:#f8f8fc;"></div><div style="position:absolute;left:1171px;top:970px;width:101px;height:30px;background:#d1d0c4;"></div><div style="position:absolute;left:1272px;top:970px;width:126px;height:30px;background:#d1d0c4;"></div><div style="position:absolute;left:1398px;top:970px;width:108px;height:30px;background:#ebebeb;"></div><div style="position:absolute;left:1506px;top:970px;width:106px;height:30px;background:#ebebeb;"></div><div style="position:absolute;left:1612px;top:970px;width:68px;height:30px;background:#fff;"></div><div style="position:absolute;left:1680px;top:970px;width:110px;height:30px;background:#f8f8fc;"></div><div style="position:absolute;left:1790px;top:970px;width:108px;height:30px;background:#ebebeb;"></div><div style="position:absolute;left:57px;top:974.7px;width:20px;height:19px;border:1px solid #1f4b87;border-radius:2px;background:#fff;"><svg width="19" height="19" style="position:absolute;left:0;top:0"><path d="M4 5.2 L16 5.2 M4 9.6 L16 9.6 M4 14 L16 14" stroke="#1f4b87" stroke-width="1.6"/></svg></div><div class="t" style="left:108px;top:975.0px;color:#1a1a1a;font-size:13.5px;letter-spacing:-0.3px;">06.01.2026</div><div class="t" style="left:180.5px;top:975.0px;width:164px;text-align:center;color:#1a1a1a;font-size:13.5px;letter-spacing:-0.1px;">Sonntag, Lena (005)</div><div class="t" style="left:345.0px;top:975.0px;width:122px;text-align:center;color:#1a1a1a;font-size:13.5px;letter-spacing:-0.3px;">3001</div><div class="t" style="left:471px;top:975.0px;color:#1a1a1a;font-size:13.5px;">11 AVO Unterbrechung</div><div style="position:absolute;left:872px;top:977.0px;width:16px;height:16px;background:#cfcfcf;border-radius:50%;"></div><div class="t" style="left:913.0px;top:975.0px;width:93px;text-align:center;color:#1a1a1a;font-size:13.5px;letter-spacing:-0.3px;">14:00</div><div class="t" style="left:1006.0px;top:975.0px;width:88px;text-align:center;color:#1a1a1a;font-size:13.5px;letter-spacing:-0.3px;">18:00</div><div class="t" style="left:1170.0px;top:975.0px;width:101px;text-align:center;color:#1a1a1a;font-size:13.5px;letter-spacing:-0.3px;">4:00</div><div class="t" style="left:1271.0px;top:975.0px;width:126px;text-align:center;color:#1a1a1a;font-size:13.5px;letter-spacing:-0.3px;">4:00</div><div class="t" style="left:1397.0px;top:975.0px;width:108px;text-align:center;color:#1a1a1a;font-size:13.5px;letter-spacing:-0.3px;">30</div><div class="t" style="left:1679.0px;top:975.0px;width:110px;text-align:center;color:#1a1a1a;font-size:13.5px;">Demo</div><div style="position:absolute;left:23px;top:1000px;width:27px;height:30px;background:#f6f6f6;"></div><div style="position:absolute;left:50px;top:1000px;width:54px;height:30px;background:#f6f6f6;"></div><div style="position:absolute;left:104px;top:1000px;width:76px;height:30px;background:#f8f8fc;"></div><div style="position:absolute;left:180px;top:1000px;width:165px;height:30px;background:#f8f8fc;"></div><div style="position:absolute;left:345px;top:1000px;width:122px;height:30px;background:#ebebeb;"></div><div style="position:absolute;left:467px;top:1000px;width:193px;height:30px;background:#b3ffa7;"></div><div style="position:absolute;left:660px;top:1000px;width:66px;height:30px;background:#fff;"></div><div style="position:absolute;left:726px;top:1000px;width:66px;height:30px;background:#fff;"></div><div style="position:absolute;left:792px;top:1000px;width:58px;height:30px;background:#f8f8fc;"></div><div style="position:absolute;left:850px;top:1000px;width:64px;height:30px;background:#f6f6f6;"></div><div style="position:absolute;left:914px;top:1000px;width:93px;height:30px;background:#ebebeb;"></div><div style="position:absolute;left:1007px;top:1000px;width:88px;height:30px;background:#ebebeb;"></div><div style="position:absolute;left:1095px;top:1000px;width:76px;height:30px;background:#f8f8fc;"></div><div style="position:absolute;left:1171px;top:1000px;width:101px;height:30px;background:#d1d0c4;"></div><div style="position:absolute;left:1272px;top:1000px;width:126px;height:30px;background:#d1d0c4;"></div><div style="position:absolute;left:1398px;top:1000px;width:108px;height:30px;background:#ebebeb;"></div><div style="position:absolute;left:1506px;top:1000px;width:106px;height:30px;background:#ebebeb;"></div><div style="position:absolute;left:1612px;top:1000px;width:68px;height:30px;background:#fff;"></div><div style="position:absolute;left:1680px;top:1000px;width:110px;height:30px;background:#f8f8fc;"></div><div style="position:absolute;left:1790px;top:1000px;width:108px;height:30px;background:#ebebeb;"></div><div style="position:absolute;left:57px;top:1004.7px;width:20px;height:19px;border:1px solid #1f4b87;border-radius:2px;background:#fff;"><svg width="19" height="19" style="position:absolute;left:0;top:0"><path d="M4 5.2 L16 5.2 M4 9.6 L16 9.6 M4 14 L16 14" stroke="#1f4b87" stroke-width="1.6"/></svg></div><div class="t" style="left:108px;top:1005.0px;color:#1a1a1a;font-size:13.5px;letter-spacing:-0.3px;">06.01.2026</div><div class="t" style="left:180.5px;top:1005.0px;width:164px;text-align:center;color:#1a1a1a;font-size:13.5px;letter-spacing:-0.1px;">Riegler, Robin (001)</div><div class="t" style="left:345.0px;top:1005.0px;width:122px;text-align:center;color:#1a1a1a;font-size:13.5px;letter-spacing:-0.3px;">3001</div><div class="t" style="left:471px;top:1005.0px;color:#1a1a1a;font-size:13.5px;">11 AVO Unterbrechung</div><div style="position:absolute;left:872px;top:1007.0px;width:16px;height:16px;background:#f24c3d;border-radius:50%;"></div><div class="t" style="left:913.0px;top:1005.0px;width:93px;text-align:center;color:#1a1a1a;font-size:13.5px;letter-spacing:-0.3px;">10:30</div><div class="t" style="left:1006.0px;top:1005.0px;width:88px;text-align:center;color:#1a1a1a;font-size:13.5px;letter-spacing:-0.3px;">12:30</div><div class="t" style="left:1170.0px;top:1005.0px;width:101px;text-align:center;color:#1a1a1a;font-size:13.5px;letter-spacing:-0.3px;">2:00</div><div class="t" style="left:1271.0px;top:1005.0px;width:126px;text-align:center;color:#1a1a1a;font-size:13.5px;letter-spacing:-0.3px;">2:00</div><div class="t" style="left:1397.0px;top:1005.0px;width:108px;text-align:center;color:#1a1a1a;font-size:13.5px;letter-spacing:-0.3px;">15</div><div class="t" style="left:1679.0px;top:1005.0px;width:110px;text-align:center;color:#1a1a1a;font-size:13.5px;">Demo</div><div style="position:absolute;left:23px;top:1030px;width:27px;height:30px;background:#fff;"></div><div style="position:absolute;left:50px;top:1030px;width:54px;height:30px;background:#fff;"></div><div style="position:absolute;left:104px;top:1030px;width:76px;height:30px;background:#f8f8fc;"></div><div style="position:absolute;left:180px;top:1030px;width:165px;height:30px;background:#f8f8fc;"></div><div style="position:absolute;left:345px;top:1030px;width:122px;height:30px;background:#ebebeb;"></div><div style="position:absolute;left:467px;top:1030px;width:193px;height:30px;background:#5bffff;"></div><div style="position:absolute;left:660px;top:1030px;width:66px;height:30px;background:#fff;"></div><div style="position:absolute;left:726px;top:1030px;width:66px;height:30px;background:#fff;"></div><div style="position:absolute;left:792px;top:1030px;width:58px;height:30px;background:#f8f8fc;"></div><div style="position:absolute;left:850px;top:1030px;width:64px;height:30px;background:#fff;"></div><div style="position:absolute;left:914px;top:1030px;width:93px;height:30px;background:#ebebeb;"></div><div style="position:absolute;left:1007px;top:1030px;width:88px;height:30px;background:#ebebeb;"></div><div style="position:absolute;left:1095px;top:1030px;width:76px;height:30px;background:#f8f8fc;"></div><div style="position:absolute;left:1171px;top:1030px;width:101px;height:30px;background:#d1d0c4;"></div><div style="position:absolute;left:1272px;top:1030px;width:126px;height:30px;background:#d1d0c4;"></div><div style="position:absolute;left:1398px;top:1030px;width:108px;height:30px;background:#ebebeb;"></div><div style="position:absolute;left:1506px;top:1030px;width:106px;height:30px;background:#ebebeb;"></div><div style="position:absolute;left:1612px;top:1030px;width:68px;height:30px;background:#fff;"></div><div style="position:absolute;left:1680px;top:1030px;width:110px;height:30px;background:#f8f8fc;"></div><div style="position:absolute;left:1790px;top:1030px;width:108px;height:30px;background:#ebebeb;"></div><div style="position:absolute;left:57px;top:1034.7px;width:20px;height:19px;border:1px solid #1f4b87;border-radius:2px;background:#fff;"><svg width="19" height="19" style="position:absolute;left:0;top:0"><path d="M4 5.2 L16 5.2 M4 9.6 L16 9.6 M4 14 L16 14" stroke="#1f4b87" stroke-width="1.6"/></svg></div><div class="t" style="left:108px;top:1035.0px;color:#1a1a1a;font-size:13.5px;letter-spacing:-0.3px;">06.01.2026</div><div class="t" style="left:180.5px;top:1035.0px;width:164px;text-align:center;color:#1a1a1a;font-size:13.5px;letter-spacing:-0.1px;">Rotfelder, Raoul (007)</div><div class="t" style="left:345.0px;top:1035.0px;width:122px;text-align:center;color:#1a1a1a;font-size:13.5px;letter-spacing:-0.3px;">3001</div><div class="t" style="left:471px;top:1035.0px;color:#1a1a1a;font-size:13.5px;">13 Rüsten Unterbrechung</div><div class="t" style="left:913.0px;top:1035.0px;width:93px;text-align:center;color:#1a1a1a;font-size:13.5px;letter-spacing:-0.3px;">8:00</div><div class="t" style="left:1006.0px;top:1035.0px;width:88px;text-align:center;color:#1a1a1a;font-size:13.5px;letter-spacing:-0.3px;">10:00</div><div class="t" style="left:1170.0px;top:1035.0px;width:101px;text-align:center;color:#1a1a1a;font-size:13.5px;letter-spacing:-0.3px;">2:15</div><div class="t" style="left:1271.0px;top:1035.0px;width:126px;text-align:center;color:#1a1a1a;font-size:13.5px;letter-spacing:-0.3px;">2:15</div><div class="t" style="left:1679.0px;top:1035.0px;width:110px;text-align:center;color:#1a1a1a;font-size:13.5px;">Demo</div><div style="position:absolute;left:23px;top:880px;width:1px;height:180px;background:#d9dfe8;"></div><div style="position:absolute;left:50px;top:880px;width:1px;height:180px;background:#d9dfe8;"></div><div style="position:absolute;left:104px;top:880px;width:1px;height:180px;background:#d9dfe8;"></div><div style="position:absolute;left:180px;top:880px;width:1px;height:180px;background:#d9dfe8;"></div><div style="position:absolute;left:345px;top:880px;width:1px;height:180px;background:#d9dfe8;"></div><div style="position:absolute;left:467px;top:880px;width:1px;height:180px;background:#d9dfe8;"></div><div style="position:absolute;left:660px;top:880px;width:1px;height:180px;background:#d9dfe8;"></div><div style="position:absolute;left:726px;top:880px;width:1px;height:180px;background:#d9dfe8;"></div><div style="position:absolute;left:792px;top:880px;width:1px;height:180px;background:#d9dfe8;"></div><div style="position:absolute;left:850px;top:880px;width:1px;height:180px;background:#d9dfe8;"></div><div style="position:absolute;left:914px;top:880px;width:1px;height:180px;background:#d9dfe8;"></div><div style="position:absolute;left:1007px;top:880px;width:1px;height:180px;background:#d9dfe8;"></div><div style="position:absolute;left:1095px;top:880px;width:1px;height:180px;background:#d9dfe8;"></div><div style="position:absolute;left:1171px;top:880px;width:1px;height:180px;background:#d9dfe8;"></div><div style="position:absolute;left:1272px;top:880px;width:1px;height:180px;background:#d9dfe8;"></div><div style="position:absolute;left:1398px;top:880px;width:1px;height:180px;background:#d9dfe8;"></div><div style="position:absolute;left:1506px;top:880px;width:1px;height:180px;background:#d9dfe8;"></div><div style="position:absolute;left:1612px;top:880px;width:1px;height:180px;background:#d9dfe8;"></div><div style="position:absolute;left:1680px;top:880px;width:1px;height:180px;background:#d9dfe8;"></div><div style="position:absolute;left:1790px;top:880px;width:1px;height:180px;background:#d9dfe8;"></div><div style="position:absolute;left:1898px;top:880px;width:1px;height:180px;background:#d9dfe8;"></div><div class="t" style="left:1636px;top:1072.7px;color:#3b5e8e;font-size:13px;">1 bis 6 von 6 Einträgen</div><div style="position:absolute;left:1805px;top:1061px;width:92px;height:33px;border:1px solid #cdd7e6;border-radius:2px;background:#fff;"></div><div style="position:absolute;left:1837px;top:1061px;width:28px;height:32px;border:1.5px solid #1f4b87;background:#e6f2fc;"></div><div class="t" style="left:1837.5px;top:1069px;width:30px;text-align:center;color:#1f4b87;font-size:13.5px;">1</div><svg style="position:absolute;left:1814px;top:1071px" width="14" height="16"><path d="M9 2 L4 8 L9 14" fill="none" stroke="#c3cfe0" stroke-width="1.2"/></svg><svg style="position:absolute;left:1876px;top:1071px" width="14" height="16"><path d="M5 2 L10 8 L5 14" fill="none" stroke="#c3cfe0" stroke-width="1.2"/></svg>
</body></html>
